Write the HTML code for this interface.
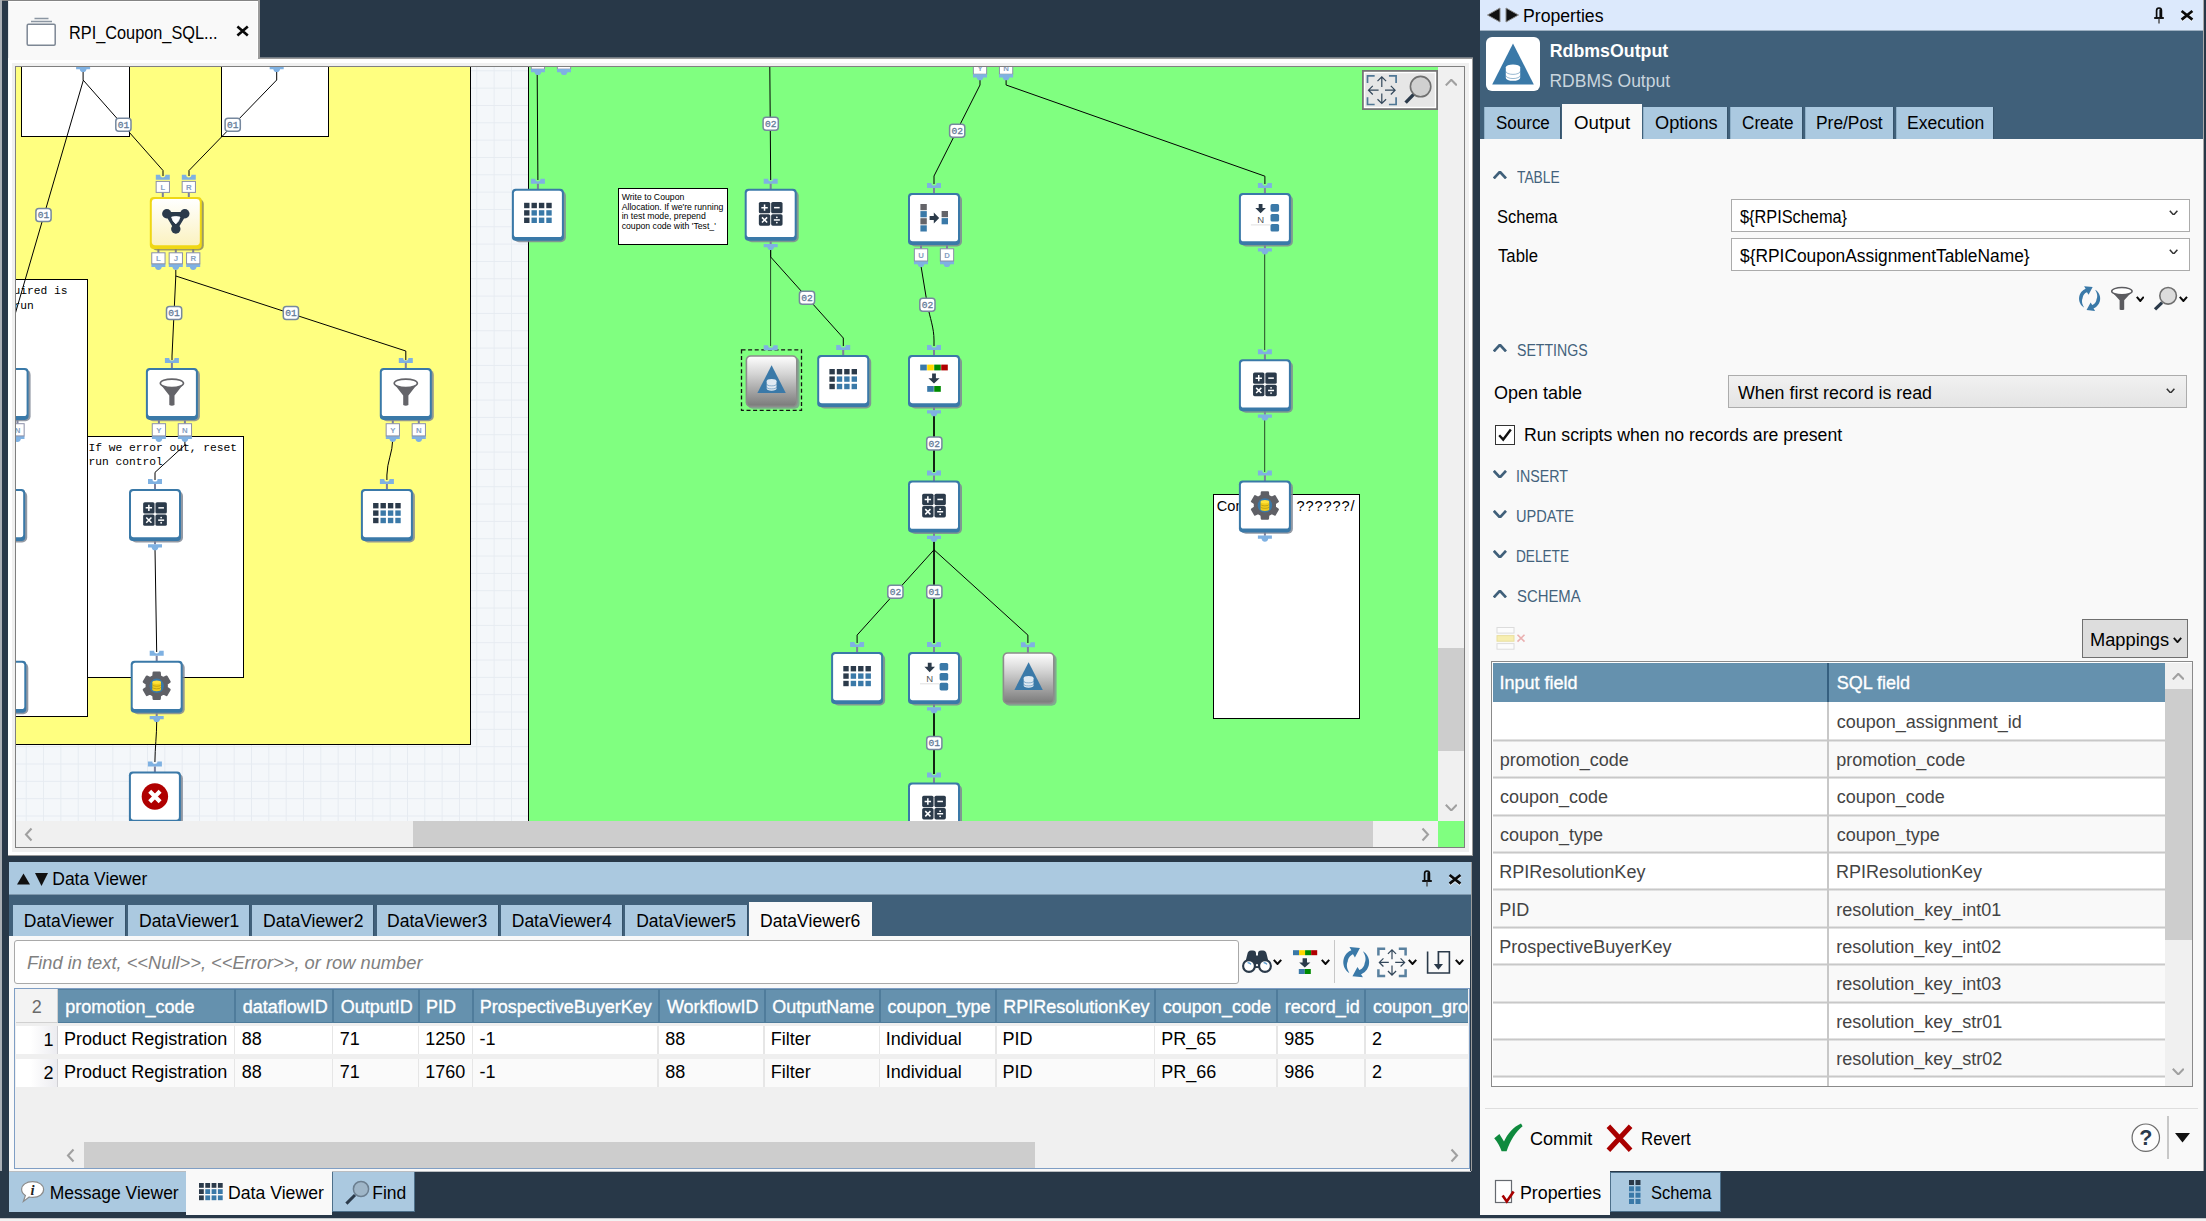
<!DOCTYPE html><html><head><meta charset="utf-8"><title>Dataflow</title><style>html,body{margin:0;padding:0}body{width:2206px;height:1221px;position:relative;overflow:hidden;background:#283848;font-family:"Liberation Sans",sans-serif;font-size:17.5px}div,span.t,svg{position:absolute;box-sizing:border-box}span.t{white-space:pre;transform-origin:0 0;display:block}</style></head><body>
<div style="left:0px;top:0px;width:2px;height:1171px;background:#a9aeb4;"></div>
<div style="left:2px;top:0px;width:258px;height:1px;background:#858585;"></div>
<div style="left:8px;top:1px;width:250px;height:59px;background:#f9f9f9;border-left:1px solid #e4e6e8;border-top:1px solid #fff;border-right:1px solid #fff;"></div>
<div style="left:258px;top:0px;width:2px;height:58px;background:#9c9c9c;"></div>
<div style="left:260px;top:57px;width:1213px;height:1px;background:#737b84;"></div>
<svg style="left:25px;top:15px" width="32" height="32"><path d="M9.5 3.5H23.5M6 6.5H27" stroke="#8b96a2" stroke-width="1.3" fill="none"/><rect x="2.2" y="9.2" width="28" height="21" rx="1.2" fill="#fff" stroke="#7d8794" stroke-width="1.5"/></svg>
<span class="t" style="left:69.06px;top:25.20px;font-size:17.5px;line-height:17.5px;color:#000;transform:scaleX(0.9315);">RPI_Coupon_SQL...</span>
<svg style="left:236px;top:25px" width="14" height="13"><path d="M1.4 1.6L11.8 10.6M11.8 1.6L1.4 10.6" stroke="#0a0a0a" stroke-width="2.6" fill="none"/></svg>
<div style="left:8px;top:58px;width:1465px;height:798px;background:#ffffff;border:1px solid #9a9a9a;border-left:none;"></div>
<div style="left:8px;top:58px;width:250px;height:2px;background:#f9f9f9;"></div>
<div style="left:12px;top:63px;width:1457px;height:789px;background:#f0f0f0;"></div>
<div style="left:15px;top:66px;width:1450px;height:782px;background:#f0f0f0;border:1px solid #7f7f7f;"></div>
<svg style="position:absolute;left:16px;top:67px" width="1422" height="754" viewBox="16 67 1422 754" font-family="'Liberation Sans',sans-serif"><defs><pattern id="gr" x="8.4" y="1" width="17.33" height="17.33" patternUnits="userSpaceOnUse"><path d="M0.5 0V17.33M0 0.5H17.33" stroke="#e6ebf1" stroke-width="1" fill="none"/></pattern><linearGradient id="gy" x1="0" y1="0" x2="0" y2="1"><stop offset="0" stop-color="#ffffff"/><stop offset="1" stop-color="#fbf2c0"/></linearGradient><linearGradient id="gg" x1="0" y1="0" x2="0" y2="1"><stop offset="0" stop-color="#fdfdfd"/><stop offset=".35" stop-color="#d4d4d4"/><stop offset="1" stop-color="#7c7c7c"/></linearGradient></defs><rect x="16" y="67" width="1422" height="754" fill="#f4f7fa"/><rect x="16" y="67" width="1422" height="754" fill="url(#gr)"/><rect x="10" y="60" width="460.5" height="684.5" fill="#ffff80" stroke="#000" stroke-width="1"/><rect x="528.5" y="60" width="920" height="770" fill="#80ff80" stroke="#000" stroke-width="1"/><rect x="21.5" y="60" width="108" height="76.5" fill="#fff" stroke="#000" stroke-width="1"/><rect x="221.5" y="60" width="107" height="76.5" fill="#fff" stroke="#000" stroke-width="1"/><rect x="10" y="279.5" width="77.5" height="437" fill="#fff" stroke="#000" stroke-width="1"/><rect x="87.5" y="436.5" width="156" height="241" fill="#fff" stroke="#000" stroke-width="1"/><rect x="618.5" y="188.5" width="109" height="56" fill="#fff" stroke="#000" stroke-width="1"/><rect x="1213.5" y="494.5" width="146" height="224" fill="#fff" stroke="#000" stroke-width="1"/><text x="-6.7" y="294.2" font-family="'Liberation Mono',monospace" font-size="11.25">required is</text><text x="-6.7" y="309.3" font-family="'Liberation Mono',monospace" font-size="11.25">to run</text><text x="88.6" y="451" font-family="'Liberation Mono',monospace" font-size="11.25">If we error out, reset</text><text x="88.6" y="464.7" font-family="'Liberation Mono',monospace" font-size="11.25">run control</text><text x="621.7" y="200.00" font-size="8.7">Write to Coupon</text><text x="621.7" y="209.55" font-size="8.7">Allocation. If we're running</text><text x="621.7" y="219.10" font-size="8.7">in test mode, prepend</text><text x="621.7" y="228.65" font-size="8.7">coupon code with 'Test_'</text><text x="1216.8" y="510.5" font-size="14.6">Com</text><text x="1296.4" y="510.5" font-size="14.6" letter-spacing="0.9">??????/</text><path d="M83.1 72V80L163 170.5V176 M83.4 80L14 318 M276.7 72V80L189 170.5V176" fill="none" stroke="#000" stroke-width="1"/><path d="M175.8 270V276L172 356V360 M175.8 276L405.8 351V360" fill="none" stroke="#000" stroke-width="1"/><path d="M184.9 440V445L155 472.4V480 M392.7 440C392.7 452 387 462 386.9 475V480" fill="none" stroke="#000" stroke-width="1"/><path d="M155 549L156.7 652 M156.7 722C156.7 735 155 748 154.9 762" fill="none" stroke="#000" stroke-width="1"/><path d="M537.2 74L537.9 180 M769.8 67L770.7 180" fill="none" stroke="#000" stroke-width="1"/><path d="M770.6 250V346" fill="none" stroke="#000" stroke-width="0.9" opacity=".8"/><path d="M770.7 250V257L843.3 338V346" fill="none" stroke="#000" stroke-width="1"/><path d="M980 80V85L934 176V184 M1006.1 80V85L1264.9 176.2V184" fill="none" stroke="#000" stroke-width="1"/><path d="M921 266L927.4 304.8C930 318 934 328 934 340V346" fill="none" stroke="#000" stroke-width="1"/><path d="M934 416V472 M934 541V643 M934 712V774" fill="none" stroke="#000" stroke-width="1.7"/><path d="M934 549.8L857.1 635.1V643 M934 549.8L1027.9 635.1V643" fill="none" stroke="#000" stroke-width="1"/><path d="M1264.7 253V350 M1264.7 420V472" fill="none" stroke="#000" stroke-width="0.9" opacity=".8"/><path d="M76.1 66H90.1V69.2H86.5A3.5 3.8 0 0 1 79.69999999999999 69.2H76.1Z" fill="#7fb1e2"/><path d="M269.7 66H283.7V69.2H280.09999999999997A3.5 3.8 0 0 1 273.3 69.2H269.7Z" fill="#7fb1e2"/><rect x="531.25" y="56.6" width="13.3" height="12.5" fill="#fff" stroke="#8a90a8" stroke-width="1"/><text x="537.9" y="65.85" font-size="7.8" font-weight="700" text-anchor="middle" fill="#86a0c2"></text><path d="M530.9 69H544.9V72.2H541.3A3.5 3.8 0 0 1 534.5 72.2H530.9Z" fill="#7fb1e2"/><rect x="557.35" y="56.6" width="13.3" height="12.5" fill="#fff" stroke="#8a90a8" stroke-width="1"/><text x="564" y="65.85" font-size="7.8" font-weight="700" text-anchor="middle" fill="#86a0c2"></text><path d="M557 69H571V72.2H567.4A3.5 3.8 0 0 1 560.6 72.2H557Z" fill="#7fb1e2"/><rect x="973.35" y="61.7" width="13.3" height="12.5" fill="#fff" stroke="#8a90a8" stroke-width="1"/><text x="980" y="70.95" font-size="7.8" font-weight="700" text-anchor="middle" fill="#86a0c2">Y</text><path d="M973 74.2H987V77.4H983.4A3.5 3.8 0 0 1 976.6 77.4H973Z" fill="#7fb1e2"/><rect x="999.45" y="61.7" width="13.3" height="12.5" fill="#fff" stroke="#8a90a8" stroke-width="1"/><text x="1006.1" y="70.95" font-size="7.8" font-weight="700" text-anchor="middle" fill="#86a0c2">N</text><path d="M999.1 74.2H1013.1V77.4H1009.5A3.5 3.8 0 0 1 1002.7 77.4H999.1Z" fill="#7fb1e2"/><rect x="161.8" y="192.0" width="2" height="6.0" fill="#7c7f9c"/><path d="M155.8 174.8H160.20000000000002A2.6 2.6 0 0 0 165.4 174.8H169.8V179.8H155.8Z" fill="#7fb1e2"/><rect x="156.15" y="181.4" width="13.3" height="11" fill="#fff" stroke="#8a90a8" stroke-width="1"/><text x="162.8" y="189.9" font-size="7.8" font-weight="700" text-anchor="middle" fill="#86a0c2">L</text><rect x="187.8" y="192.0" width="2" height="6.0" fill="#7c7f9c"/><path d="M181.8 174.8H186.20000000000002A2.6 2.6 0 0 0 191.4 174.8H195.8V179.8H181.8Z" fill="#7fb1e2"/><rect x="182.15" y="181.4" width="13.3" height="11" fill="#fff" stroke="#8a90a8" stroke-width="1"/><text x="188.8" y="189.9" font-size="7.8" font-weight="700" text-anchor="middle" fill="#86a0c2">R</text><rect x="157.4" y="247.0" width="2" height="6.0" fill="#7c7f9c"/><path d="M151.4 263.8H165.4V267.0H161.8A3.5 3.8 0 0 1 155.0 267.0H151.4Z" fill="#7fb1e2"/><rect x="151.75" y="252.8" width="13.3" height="11" fill="#fff" stroke="#8a90a8" stroke-width="1"/><text x="158.4" y="261.3" font-size="7.8" font-weight="700" text-anchor="middle" fill="#86a0c2">L</text><rect x="174.8" y="247.0" width="2" height="6.0" fill="#7c7f9c"/><path d="M168.8 263.8H182.8V267.0H179.20000000000002A3.5 3.8 0 0 1 172.4 267.0H168.8Z" fill="#7fb1e2"/><rect x="169.15" y="252.8" width="13.3" height="11" fill="#fff" stroke="#8a90a8" stroke-width="1"/><text x="175.8" y="261.3" font-size="7.8" font-weight="700" text-anchor="middle" fill="#86a0c2">J</text><rect x="192.20000000000002" y="247.0" width="2" height="6.0" fill="#7c7f9c"/><path d="M186.20000000000002 263.8H200.20000000000002V267.0H196.60000000000002A3.5 3.8 0 0 1 189.8 267.0H186.20000000000002Z" fill="#7fb1e2"/><rect x="186.55" y="252.8" width="13.3" height="11" fill="#fff" stroke="#8a90a8" stroke-width="1"/><text x="193.20000000000002" y="261.3" font-size="7.8" font-weight="700" text-anchor="middle" fill="#86a0c2">R</text><rect x="151.8" y="199.0" width="52" height="51.4" rx="5" fill="#8d8a5a" opacity=".85"/><rect x="149.8" y="197.0" width="52" height="52" rx="4" fill="#efd714"/><rect x="151.8" y="199.0" width="48" height="46.2" rx="3.4" fill="url(#gy)"/><path d="M166.8 213.8L184.8 213.8L175.8 229.0Z" fill="#2b3a4a" stroke="#2b3a4a" stroke-width="3.4" stroke-linejoin="round"/><circle cx="166.8" cy="213.8" r="4.7" fill="#2b3a4a"/><circle cx="184.8" cy="213.8" r="4.7" fill="#2b3a4a"/><circle cx="175.8" cy="229.0" r="4.7" fill="#2b3a4a"/><path d="M171.60000000000002 217.1Q175.8 215.8 180.0 217.1Q179.20000000000002 221.4 175.8 223.9Q172.4 221.4 171.60000000000002 217.1Z" fill="#fff" stroke="#fff" stroke-width="0.8" stroke-linejoin="round"/><path d="M164.9 357.9H169.3A2.6 2.6 0 0 0 174.5 357.9H178.9V362.9H164.9Z" fill="#7fb1e2"/><rect x="170.9" y="362.9" width="2" height="6.0" fill="#7c7f9c"/><rect x="157.9" y="417.9" width="2" height="6.0" fill="#7c7f9c"/><path d="M151.9 435.9H165.9V439.09999999999997H162.3A3.5 3.8 0 0 1 155.5 439.09999999999997H151.9Z" fill="#7fb1e2"/><rect x="152.25" y="423.7" width="13.3" height="12.2" fill="#fff" stroke="#8a90a8" stroke-width="1"/><text x="158.9" y="432.8" font-size="7.8" font-weight="700" text-anchor="middle" fill="#86a0c2">Y</text><rect x="183.9" y="417.9" width="2" height="6.0" fill="#7c7f9c"/><path d="M177.9 435.9H191.9V439.09999999999997H188.3A3.5 3.8 0 0 1 181.5 439.09999999999997H177.9Z" fill="#7fb1e2"/><rect x="178.25" y="423.7" width="13.3" height="12.2" fill="#fff" stroke="#8a90a8" stroke-width="1"/><text x="184.9" y="432.8" font-size="7.8" font-weight="700" text-anchor="middle" fill="#86a0c2">N</text><rect x="147.9" y="369.9" width="52" height="51.4" rx="5" fill="#7f8794" opacity=".85"/><rect x="145.9" y="367.9" width="52" height="52" rx="3.8" fill="#3a79a8"/><rect x="147.9" y="369.9" width="48" height="46.2" rx="2.6" fill="#fff"/><path d="M159.9 383.4 L169.3 395.4 V404.9 Q171.9 406.5 174.5 404.9 V395.4 L183.9 383.4 Z" fill="#646469"/><ellipse cx="171.9" cy="383.29999999999995" rx="11.6" ry="4.2" fill="#fff" stroke="#646469" stroke-width="1.6"/><path d="M398.8 357.9H403.2A2.6 2.6 0 0 0 408.40000000000003 357.9H412.8V362.9H398.8Z" fill="#7fb1e2"/><rect x="404.8" y="362.9" width="2" height="6.0" fill="#7c7f9c"/><rect x="391.8" y="417.9" width="2" height="6.0" fill="#7c7f9c"/><path d="M385.8 435.9H399.8V439.09999999999997H396.2A3.5 3.8 0 0 1 389.40000000000003 439.09999999999997H385.8Z" fill="#7fb1e2"/><rect x="386.15000000000003" y="423.7" width="13.3" height="12.2" fill="#fff" stroke="#8a90a8" stroke-width="1"/><text x="392.8" y="432.8" font-size="7.8" font-weight="700" text-anchor="middle" fill="#86a0c2">Y</text><rect x="417.8" y="417.9" width="2" height="6.0" fill="#7c7f9c"/><path d="M411.8 435.9H425.8V439.09999999999997H422.2A3.5 3.8 0 0 1 415.40000000000003 439.09999999999997H411.8Z" fill="#7fb1e2"/><rect x="412.15000000000003" y="423.7" width="13.3" height="12.2" fill="#fff" stroke="#8a90a8" stroke-width="1"/><text x="418.8" y="432.8" font-size="7.8" font-weight="700" text-anchor="middle" fill="#86a0c2">N</text><rect x="381.8" y="369.9" width="52" height="51.4" rx="5" fill="#7f8794" opacity=".85"/><rect x="379.8" y="367.9" width="52" height="52" rx="3.8" fill="#3a79a8"/><rect x="381.8" y="369.9" width="48" height="46.2" rx="2.6" fill="#fff"/><path d="M393.8 383.4 L403.2 395.4 V404.9 Q405.8 406.5 408.40000000000003 404.9 V395.4 L417.8 383.4 Z" fill="#646469"/><ellipse cx="405.8" cy="383.29999999999995" rx="11.6" ry="4.2" fill="#fff" stroke="#646469" stroke-width="1.6"/><rect x="16.5" y="417.9" width="2" height="6.0" fill="#7c7f9c"/><path d="M10.5 435.9H24.5V439.09999999999997H20.9A3.5 3.8 0 0 1 14.1 439.09999999999997H10.5Z" fill="#7fb1e2"/><rect x="10.85" y="423.7" width="13.3" height="12.2" fill="#fff" stroke="#8a90a8" stroke-width="1"/><text x="17.5" y="432.8" font-size="7.8" font-weight="700" text-anchor="middle" fill="#86a0c2">N</text><rect x="-21.4" y="369.9" width="52" height="51.4" rx="5" fill="#7f8794" opacity=".85"/><rect x="-23.4" y="367.9" width="52" height="52" rx="3.8" fill="#3a79a8"/><rect x="-21.4" y="369.9" width="48" height="46.2" rx="2.6" fill="#fff"/><path d="M-9.4 383.4 L0.0 395.4 V404.9 Q2.6 406.5 5.2 404.9 V395.4 L14.6 383.4 Z" fill="#646469"/><ellipse cx="2.6" cy="383.29999999999995" rx="11.6" ry="4.2" fill="#fff" stroke="#646469" stroke-width="1.6"/><path d="M148 479H152.4A2.6 2.6 0 0 0 157.6 479H162V484H148Z" fill="#7fb1e2"/><rect x="154" y="484" width="2" height="6" fill="#7c7f9c"/><rect x="154" y="539" width="2" height="5.399999999999977" fill="#7c7f9c"/><path d="M148 544.2H162V547.4000000000001H158.4A3.5 3.8 0 0 1 151.6 547.4000000000001H148Z" fill="#7fb1e2"/><rect x="131" y="491" width="52" height="51.4" rx="5" fill="#7f8794" opacity=".85"/><rect x="129" y="489" width="52" height="52" rx="3.8" fill="#3a79a8"/><rect x="131" y="491" width="48" height="46.2" rx="2.6" fill="#fff"/><rect x="143.15" y="502.15" width="11.4" height="11.4" rx="1.6" fill="#2b3a4a"/><rect x="155.45" y="502.15" width="11.4" height="11.4" rx="1.6" fill="#2b3a4a"/><rect x="143.15" y="514.45" width="11.4" height="11.4" rx="1.6" fill="#2b3a4a"/><rect x="155.45" y="514.45" width="11.4" height="11.4" rx="1.6" fill="#2b3a4a"/><path d="M145.65000000000003 507.85H152.05M148.85000000000002 504.65000000000003V511.05" stroke="#fff" stroke-width="1.5" stroke-linecap="butt"/><path d="M158.34999999999997 507.85H163.95" stroke="#fff" stroke-width="1.5" stroke-linecap="butt"/><path d="M146.25000000000003 517.5500000000001L151.45000000000002 522.7500000000001M151.45000000000002 517.5500000000001L146.25000000000003 522.7500000000001" stroke="#fff" stroke-width="1.5" stroke-linecap="butt"/><path d="M158.14999999999998 520.1500000000001H164.14999999999998" stroke="#fff" stroke-width="1.5" stroke-linecap="butt"/><circle cx="161.14999999999998" cy="517.5500000000001" r="0.9" fill="#fff"/><circle cx="161.14999999999998" cy="522.7500000000001" r="0.9" fill="#fff"/><path d="M379.9 479H384.29999999999995A2.6 2.6 0 0 0 389.5 479H393.9V484H379.9Z" fill="#7fb1e2"/><rect x="385.9" y="484" width="2" height="6" fill="#7c7f9c"/><rect x="362.9" y="491" width="52" height="51.4" rx="5" fill="#7f8794" opacity=".85"/><rect x="360.9" y="489" width="52" height="52" rx="3.8" fill="#3a79a8"/><rect x="362.9" y="491" width="48" height="46.2" rx="2.6" fill="#fff"/><rect x="373.10" y="503.00" width="5.4" height="5.4" fill="#2b3a4a"/><rect x="380.50" y="503.00" width="5.4" height="5.4" fill="#2b3a4a"/><rect x="387.90" y="503.00" width="5.4" height="5.4" fill="#2b3a4a"/><rect x="395.30" y="503.00" width="5.4" height="5.4" fill="#2b3a4a"/><rect x="373.10" y="510.40" width="5.4" height="5.4" fill="#2b3a4a"/><rect x="380.50" y="510.40" width="5.4" height="5.4" fill="#3a79a8"/><rect x="387.90" y="510.40" width="5.4" height="5.4" fill="#3a79a8"/><rect x="395.30" y="510.40" width="5.4" height="5.4" fill="#3a79a8"/><rect x="373.10" y="517.80" width="5.4" height="5.4" fill="#2b3a4a"/><rect x="380.50" y="517.80" width="5.4" height="5.4" fill="#3a79a8"/><rect x="387.90" y="517.80" width="5.4" height="5.4" fill="#3a79a8"/><rect x="395.30" y="517.80" width="5.4" height="5.4" fill="#3a79a8"/><rect x="-24.8" y="491" width="52" height="51.4" rx="5" fill="#7f8794" opacity=".85"/><rect x="-26.8" y="489" width="52" height="52" rx="3.8" fill="#3a79a8"/><rect x="-24.8" y="491" width="48" height="46.2" rx="2.6" fill="#fff"/><rect x="-14.60" y="503.00" width="5.4" height="5.4" fill="#2b3a4a"/><rect x="-7.20" y="503.00" width="5.4" height="5.4" fill="#2b3a4a"/><rect x="0.20" y="503.00" width="5.4" height="5.4" fill="#2b3a4a"/><rect x="7.60" y="503.00" width="5.4" height="5.4" fill="#2b3a4a"/><rect x="-14.60" y="510.40" width="5.4" height="5.4" fill="#2b3a4a"/><rect x="-7.20" y="510.40" width="5.4" height="5.4" fill="#3a79a8"/><rect x="0.20" y="510.40" width="5.4" height="5.4" fill="#3a79a8"/><rect x="7.60" y="510.40" width="5.4" height="5.4" fill="#3a79a8"/><rect x="-14.60" y="517.80" width="5.4" height="5.4" fill="#2b3a4a"/><rect x="-7.20" y="517.80" width="5.4" height="5.4" fill="#3a79a8"/><rect x="0.20" y="517.80" width="5.4" height="5.4" fill="#3a79a8"/><rect x="7.60" y="517.80" width="5.4" height="5.4" fill="#3a79a8"/><path d="M149.7 650.8H154.1A2.6 2.6 0 0 0 159.29999999999998 650.8H163.7V655.8H149.7Z" fill="#7fb1e2"/><rect x="155.7" y="655.8" width="2" height="6.0" fill="#7c7f9c"/><rect x="155.7" y="710.8" width="2" height="5.399999999999977" fill="#7c7f9c"/><path d="M149.7 716.0H163.7V719.2H160.1A3.5 3.8 0 0 1 153.29999999999998 719.2H149.7Z" fill="#7fb1e2"/><rect x="132.7" y="662.8" width="52" height="51.4" rx="5" fill="#7f8794" opacity=".85"/><rect x="130.7" y="660.8" width="52" height="52" rx="3.8" fill="#3a79a8"/><rect x="132.7" y="662.8" width="48" height="46.2" rx="2.6" fill="#fff"/><path d="M153.38 676.16 L153.66 672.65 L159.74 672.65 L160.02 676.16 L163.39 678.10 L166.57 676.59 L169.61 681.85 L166.71 683.85 L166.71 687.75 L169.61 689.75 L166.57 695.01 L163.39 693.50 L160.02 695.44 L159.74 698.95 L153.66 698.95 L153.38 695.44 L150.01 693.50 L146.83 695.01 L143.79 689.75 L146.69 687.75 L146.69 683.85 L143.79 681.85 L146.83 676.59 L150.01 678.10Z" fill="#5f6066" stroke="#5f6066" stroke-width="2.2" stroke-linejoin="round"/><circle cx="156.7" cy="685.8" r="10.6" fill="#5f6066"/><circle cx="156.7" cy="685.8" r="7.2" fill="#3a79a8"/><rect x="152.39999999999998" y="682.1999999999999" width="8.6" height="7.4" fill="#f0cc1a"/><ellipse cx="156.7" cy="689.5999999999999" rx="4.3" ry="1.7" fill="#f0cc1a"/><ellipse cx="156.7" cy="682.1999999999999" rx="4.3" ry="1.7" fill="#ffe23a"/><path d="M152.39999999999998 684.5999999999999A4.3 1.7 0 0 0 161.0 684.5999999999999M152.39999999999998 687.0999999999999A4.3 1.7 0 0 0 161.0 687.0999999999999" fill="none" stroke="#b79a10" stroke-width="0.8"/><rect x="-23.7" y="662.8" width="52" height="51.4" rx="5" fill="#7f8794" opacity=".85"/><rect x="-25.7" y="660.8" width="52" height="52" rx="3.8" fill="#3a79a8"/><rect x="-23.7" y="662.8" width="48" height="46.2" rx="2.6" fill="#fff"/><rect x="-13.50" y="674.80" width="5.4" height="5.4" fill="#2b3a4a"/><rect x="-6.10" y="674.80" width="5.4" height="5.4" fill="#2b3a4a"/><rect x="1.30" y="674.80" width="5.4" height="5.4" fill="#2b3a4a"/><rect x="8.70" y="674.80" width="5.4" height="5.4" fill="#2b3a4a"/><rect x="-13.50" y="682.20" width="5.4" height="5.4" fill="#2b3a4a"/><rect x="-6.10" y="682.20" width="5.4" height="5.4" fill="#3a79a8"/><rect x="1.30" y="682.20" width="5.4" height="5.4" fill="#3a79a8"/><rect x="8.70" y="682.20" width="5.4" height="5.4" fill="#3a79a8"/><rect x="-13.50" y="689.60" width="5.4" height="5.4" fill="#2b3a4a"/><rect x="-6.10" y="689.60" width="5.4" height="5.4" fill="#3a79a8"/><rect x="1.30" y="689.60" width="5.4" height="5.4" fill="#3a79a8"/><rect x="8.70" y="689.60" width="5.4" height="5.4" fill="#3a79a8"/><path d="M147.9 761.5H152.3A2.6 2.6 0 0 0 157.5 761.5H161.9V766.5H147.9Z" fill="#7fb1e2"/><rect x="153.9" y="766.5" width="2" height="6.0" fill="#7c7f9c"/><rect x="130.9" y="773.5" width="52" height="51.4" rx="5" fill="#7f8794" opacity=".85"/><rect x="128.9" y="771.5" width="52" height="52" rx="3.8" fill="#3a79a8"/><rect x="130.9" y="773.5" width="48" height="46.2" rx="2.6" fill="#fff"/><circle cx="154.9" cy="796.5" r="13.2" fill="#b00000"/><path d="M149.70000000000002 791.3L160.1 801.7M160.1 791.3L149.70000000000002 801.7" stroke="#fff" stroke-width="4.2"/><path d="M530.9 178.8H535.3A2.6 2.6 0 0 0 540.5 178.8H544.9V183.8H530.9Z" fill="#7fb1e2"/><rect x="536.9" y="183.8" width="2" height="6.0" fill="#7c7f9c"/><rect x="513.9" y="190.8" width="52" height="51.4" rx="5" fill="#7f8794" opacity=".85"/><rect x="511.9" y="188.8" width="52" height="52" rx="3.8" fill="#3a79a8"/><rect x="513.9" y="190.8" width="48" height="46.2" rx="2.6" fill="#fff"/><rect x="524.10" y="202.80" width="5.4" height="5.4" fill="#2b3a4a"/><rect x="531.50" y="202.80" width="5.4" height="5.4" fill="#2b3a4a"/><rect x="538.90" y="202.80" width="5.4" height="5.4" fill="#2b3a4a"/><rect x="546.30" y="202.80" width="5.4" height="5.4" fill="#2b3a4a"/><rect x="524.10" y="210.20" width="5.4" height="5.4" fill="#2b3a4a"/><rect x="531.50" y="210.20" width="5.4" height="5.4" fill="#3a79a8"/><rect x="538.90" y="210.20" width="5.4" height="5.4" fill="#3a79a8"/><rect x="546.30" y="210.20" width="5.4" height="5.4" fill="#3a79a8"/><rect x="524.10" y="217.60" width="5.4" height="5.4" fill="#2b3a4a"/><rect x="531.50" y="217.60" width="5.4" height="5.4" fill="#3a79a8"/><rect x="538.90" y="217.60" width="5.4" height="5.4" fill="#3a79a8"/><rect x="546.30" y="217.60" width="5.4" height="5.4" fill="#3a79a8"/><path d="M763.7 178.8H768.1A2.6 2.6 0 0 0 773.3000000000001 178.8H777.7V183.8H763.7Z" fill="#7fb1e2"/><rect x="769.7" y="183.8" width="2" height="6.0" fill="#7c7f9c"/><rect x="769.7" y="238.8" width="2" height="5.400000000000006" fill="#7c7f9c"/><path d="M763.7 244.0H777.7V247.2H774.1A3.5 3.8 0 0 1 767.3000000000001 247.2H763.7Z" fill="#7fb1e2"/><rect x="746.7" y="190.8" width="52" height="51.4" rx="5" fill="#7f8794" opacity=".85"/><rect x="744.7" y="188.8" width="52" height="52" rx="3.8" fill="#3a79a8"/><rect x="746.7" y="190.8" width="48" height="46.2" rx="2.6" fill="#fff"/><rect x="758.85" y="201.95" width="11.4" height="11.4" rx="1.6" fill="#2b3a4a"/><rect x="771.15" y="201.95" width="11.4" height="11.4" rx="1.6" fill="#2b3a4a"/><rect x="758.85" y="214.25" width="11.4" height="11.4" rx="1.6" fill="#2b3a4a"/><rect x="771.15" y="214.25" width="11.4" height="11.4" rx="1.6" fill="#2b3a4a"/><path d="M761.3499999999999 207.65000000000003H767.75M764.55 204.45000000000005V210.85000000000002" stroke="#fff" stroke-width="1.5" stroke-linecap="butt"/><path d="M774.0500000000002 207.65000000000003H779.6500000000001" stroke="#fff" stroke-width="1.5" stroke-linecap="butt"/><path d="M761.9499999999999 217.35L767.15 222.54999999999998M767.15 217.35L761.9499999999999 222.54999999999998" stroke="#fff" stroke-width="1.5" stroke-linecap="butt"/><path d="M773.8500000000001 219.95H779.8500000000001" stroke="#fff" stroke-width="1.5" stroke-linecap="butt"/><circle cx="776.8500000000001" cy="217.35" r="0.9" fill="#fff"/><circle cx="776.8500000000001" cy="222.54999999999998" r="0.9" fill="#fff"/><path d="M927 183H931.4A2.6 2.6 0 0 0 936.6 183H941V188H927Z" fill="#7fb1e2"/><rect x="933" y="188" width="2" height="6" fill="#7c7f9c"/><rect x="920" y="243" width="2" height="6" fill="#7c7f9c"/><path d="M914 261.0H928V264.2H924.4A3.5 3.8 0 0 1 917.6 264.2H914Z" fill="#7fb1e2"/><rect x="914.35" y="248.8" width="13.3" height="12.2" fill="#fff" stroke="#8a90a8" stroke-width="1"/><text x="921" y="257.9" font-size="7.8" font-weight="700" text-anchor="middle" fill="#86a0c2">U</text><rect x="946" y="243" width="2" height="6" fill="#7c7f9c"/><path d="M940 261.0H954V264.2H950.4A3.5 3.8 0 0 1 943.6 264.2H940Z" fill="#7fb1e2"/><rect x="940.35" y="248.8" width="13.3" height="12.2" fill="#fff" stroke="#8a90a8" stroke-width="1"/><text x="947" y="257.9" font-size="7.8" font-weight="700" text-anchor="middle" fill="#86a0c2">D</text><rect x="910" y="195" width="52" height="51.4" rx="5" fill="#7f8794" opacity=".85"/><rect x="908" y="193" width="52" height="52" rx="3.8" fill="#3a79a8"/><rect x="910" y="195" width="48" height="46.2" rx="2.6" fill="#fff"/><rect x="920.4" y="204.00" width="6.4" height="6.2" fill="#646469"/><rect x="920.4" y="211.10" width="6.4" height="6.2" fill="#3a79a8"/><rect x="920.4" y="218.20" width="6.4" height="6.2" fill="#646469"/><rect x="920.4" y="225.30" width="6.4" height="6.2" fill="#3a79a8"/><rect x="941.6" y="211" width="6.4" height="6.2" fill="#646469"/><rect x="941.6" y="218.1" width="6.4" height="6.2" fill="#3a79a8"/><path d="M929.6 216.1H933.8V212.4L939.2 218L933.8 223.6V219.9H929.6Z" fill="#2b3a4a"/><path d="M1257.9 183.1H1262.3000000000002A2.6 2.6 0 0 0 1267.5 183.1H1271.9V188.1H1257.9Z" fill="#7fb1e2"/><rect x="1263.9" y="188.1" width="2" height="6.0" fill="#7c7f9c"/><rect x="1263.9" y="243.1" width="2" height="5.400000000000006" fill="#7c7f9c"/><path d="M1257.9 248.3H1271.9V251.5H1268.3000000000002A3.5 3.8 0 0 1 1261.5 251.5H1257.9Z" fill="#7fb1e2"/><rect x="1240.9" y="195.1" width="52" height="51.4" rx="5" fill="#7f8794" opacity=".85"/><rect x="1238.9" y="193.1" width="52" height="52" rx="3.8" fill="#3a79a8"/><rect x="1240.9" y="195.1" width="48" height="46.2" rx="2.6" fill="#fff"/><rect x="1270.5" y="204.10" width="8.6" height="7.6" rx="1.6" fill="#3a79a8"/><rect x="1270.5" y="214.00" width="8.6" height="7.6" rx="1.6" fill="#3a79a8"/><rect x="1270.5" y="223.90" width="8.6" height="7.6" rx="1.6" fill="#3a79a8"/><path d="M1258.7 203.9H1262.5V207.9H1265.9L1260.6000000000001 213.3L1255.3000000000002 207.9H1258.7Z" fill="#2b3a4a"/><text x="1260.6000000000001" y="222.7" font-size="9.5" text-anchor="middle" fill="#555">N</text><path d="M1250.9 224.9H1270.5" stroke="#d8d8d8" stroke-width="0.8"/><rect x="741.5" y="349.8" width="60" height="60.6" fill="none" stroke="#111" stroke-width="1.3" stroke-dasharray="4 2.6"/><rect x="747.6" y="357.2" width="52" height="51.6" rx="5" fill="#7f8794" opacity=".7"/><rect x="745.6" y="355.2" width="52" height="52" rx="5" fill="#8c8c8c"/><rect x="747.2" y="356.8" width="48.8" height="48.8" rx="3.6" fill="url(#gg)"/><path d="M771.6 365.2L785.8000000000001 393.0H757.4Z" fill="#3a79a8"/><path d="M766.7 381.0V388.6A4.9 2.0580000000000003 0 0 0 776.5 388.6V381.0Z" fill="#dfe9f2"/><ellipse cx="771.6" cy="381.0" rx="4.9" ry="2.0580000000000003" fill="#dfe9f2"/><path d="M766.7 383.8039A4.9 2.0580000000000003 0 0 0 776.5 383.8039M766.7 386.84389999999996A4.9 2.0580000000000003 0 0 0 776.5 386.84389999999996" fill="none" stroke="#3a79a8" stroke-width="0.7" opacity=".75"/><path d="M763.7 345.2H768.1A2.6 2.6 0 0 0 773.3000000000001 345.2H777.7V350.2H763.7Z" fill="#7fb1e2"/><path d="M836.2 345H840.6A2.6 2.6 0 0 0 845.8000000000001 345H850.2V350H836.2Z" fill="#7fb1e2"/><rect x="842.2" y="350" width="2" height="6" fill="#7c7f9c"/><rect x="819.2" y="357" width="52" height="51.4" rx="5" fill="#7f8794" opacity=".85"/><rect x="817.2" y="355" width="52" height="52" rx="3.8" fill="#3a79a8"/><rect x="819.2" y="357" width="48" height="46.2" rx="2.6" fill="#fff"/><rect x="829.40" y="369.00" width="5.4" height="5.4" fill="#2b3a4a"/><rect x="836.80" y="369.00" width="5.4" height="5.4" fill="#2b3a4a"/><rect x="844.20" y="369.00" width="5.4" height="5.4" fill="#2b3a4a"/><rect x="851.60" y="369.00" width="5.4" height="5.4" fill="#2b3a4a"/><rect x="829.40" y="376.40" width="5.4" height="5.4" fill="#2b3a4a"/><rect x="836.80" y="376.40" width="5.4" height="5.4" fill="#3a79a8"/><rect x="844.20" y="376.40" width="5.4" height="5.4" fill="#3a79a8"/><rect x="851.60" y="376.40" width="5.4" height="5.4" fill="#3a79a8"/><rect x="829.40" y="383.80" width="5.4" height="5.4" fill="#2b3a4a"/><rect x="836.80" y="383.80" width="5.4" height="5.4" fill="#3a79a8"/><rect x="844.20" y="383.80" width="5.4" height="5.4" fill="#3a79a8"/><rect x="851.60" y="383.80" width="5.4" height="5.4" fill="#3a79a8"/><path d="M927 345H931.4A2.6 2.6 0 0 0 936.6 345H941V350H927Z" fill="#7fb1e2"/><rect x="933" y="350" width="2" height="6" fill="#7c7f9c"/><rect x="933" y="405" width="2" height="5.399999999999977" fill="#7c7f9c"/><path d="M927 410.2H941V413.4H937.4A3.5 3.8 0 0 1 930.6 413.4H927Z" fill="#7fb1e2"/><rect x="910" y="357" width="52" height="51.4" rx="5" fill="#7f8794" opacity=".85"/><rect x="908" y="355" width="52" height="52" rx="3.8" fill="#3a79a8"/><rect x="910" y="357" width="48" height="46.2" rx="2.6" fill="#fff"/><rect x="920.20" y="364.6" width="6.6" height="5.8" fill="#3a79a8"/><rect x="927.20" y="364.6" width="6.6" height="5.8" fill="#ffd800"/><rect x="934.20" y="364.6" width="6.6" height="5.8" fill="#008a00"/><rect x="941.20" y="364.6" width="6.6" height="5.8" fill="#b00000"/><rect x="927.20" y="386" width="6.6" height="5.8" fill="#3a79a8"/><rect x="934.20" y="386" width="6.6" height="5.8" fill="#008a00"/><path d="M932.1 373.6H935.9V378.2H939.6L934 383.6L928.4 378.2H932.1Z" fill="#2b3a4a"/><path d="M1257.9 349.3H1262.3000000000002A2.6 2.6 0 0 0 1267.5 349.3H1271.9V354.3H1257.9Z" fill="#7fb1e2"/><rect x="1263.9" y="354.3" width="2" height="6.0" fill="#7c7f9c"/><rect x="1263.9" y="409.3" width="2" height="5.399999999999977" fill="#7c7f9c"/><path d="M1257.9 414.5H1271.9V417.7H1268.3000000000002A3.5 3.8 0 0 1 1261.5 417.7H1257.9Z" fill="#7fb1e2"/><rect x="1240.9" y="361.3" width="52" height="51.4" rx="5" fill="#7f8794" opacity=".85"/><rect x="1238.9" y="359.3" width="52" height="52" rx="3.8" fill="#3a79a8"/><rect x="1240.9" y="361.3" width="48" height="46.2" rx="2.6" fill="#fff"/><rect x="1253.05" y="372.45" width="11.4" height="11.4" rx="1.6" fill="#2b3a4a"/><rect x="1265.35" y="372.45" width="11.4" height="11.4" rx="1.6" fill="#2b3a4a"/><rect x="1253.05" y="384.75" width="11.4" height="11.4" rx="1.6" fill="#2b3a4a"/><rect x="1265.35" y="384.75" width="11.4" height="11.4" rx="1.6" fill="#2b3a4a"/><path d="M1255.55 378.15000000000003H1261.95M1258.75 374.95000000000005V381.35" stroke="#fff" stroke-width="1.5" stroke-linecap="butt"/><path d="M1268.2500000000002 378.15000000000003H1273.8500000000001" stroke="#fff" stroke-width="1.5" stroke-linecap="butt"/><path d="M1256.15 387.84999999999997L1261.35 393.05M1261.35 387.84999999999997L1256.15 393.05" stroke="#fff" stroke-width="1.5" stroke-linecap="butt"/><path d="M1268.0500000000002 390.45H1274.0500000000002" stroke="#fff" stroke-width="1.5" stroke-linecap="butt"/><circle cx="1271.0500000000002" cy="387.84999999999997" r="0.9" fill="#fff"/><circle cx="1271.0500000000002" cy="393.05" r="0.9" fill="#fff"/><path d="M927 470.6H931.4A2.6 2.6 0 0 0 936.6 470.6H941V475.6H927Z" fill="#7fb1e2"/><rect x="933" y="475.6" width="2" height="6.0" fill="#7c7f9c"/><rect x="933" y="530.6" width="2" height="5.399999999999977" fill="#7c7f9c"/><path d="M927 535.8000000000001H941V539.0000000000001H937.4A3.5 3.8 0 0 1 930.6 539.0000000000001H927Z" fill="#7fb1e2"/><rect x="910" y="482.6" width="52" height="51.4" rx="5" fill="#7f8794" opacity=".85"/><rect x="908" y="480.6" width="52" height="52" rx="3.8" fill="#3a79a8"/><rect x="910" y="482.6" width="48" height="46.2" rx="2.6" fill="#fff"/><rect x="922.15" y="493.75" width="11.4" height="11.4" rx="1.6" fill="#2b3a4a"/><rect x="934.45" y="493.75" width="11.4" height="11.4" rx="1.6" fill="#2b3a4a"/><rect x="922.15" y="506.05" width="11.4" height="11.4" rx="1.6" fill="#2b3a4a"/><rect x="934.45" y="506.05" width="11.4" height="11.4" rx="1.6" fill="#2b3a4a"/><path d="M924.6499999999999 499.45000000000005H931.05M927.8499999999999 496.25000000000006V502.65000000000003" stroke="#fff" stroke-width="1.5" stroke-linecap="butt"/><path d="M937.3500000000001 499.45000000000005H942.95" stroke="#fff" stroke-width="1.5" stroke-linecap="butt"/><path d="M925.2499999999999 509.15L930.4499999999999 514.35M930.4499999999999 509.15L925.2499999999999 514.35" stroke="#fff" stroke-width="1.5" stroke-linecap="butt"/><path d="M937.1500000000001 511.75H943.1500000000001" stroke="#fff" stroke-width="1.5" stroke-linecap="butt"/><circle cx="940.1500000000001" cy="509.15" r="0.9" fill="#fff"/><circle cx="940.1500000000001" cy="514.35" r="0.9" fill="#fff"/><path d="M1257.9 470.4H1262.3000000000002A2.6 2.6 0 0 0 1267.5 470.4H1271.9V475.4H1257.9Z" fill="#7fb1e2"/><rect x="1263.9" y="475.4" width="2" height="6.0" fill="#7c7f9c"/><rect x="1263.9" y="530.4" width="2" height="5.399999999999977" fill="#7c7f9c"/><path d="M1257.9 535.6H1271.9V538.8000000000001H1268.3000000000002A3.5 3.8 0 0 1 1261.5 538.8000000000001H1257.9Z" fill="#7fb1e2"/><rect x="1240.9" y="482.4" width="52" height="51.4" rx="5" fill="#7f8794" opacity=".85"/><rect x="1238.9" y="480.4" width="52" height="52" rx="3.8" fill="#3a79a8"/><rect x="1240.9" y="482.4" width="48" height="46.2" rx="2.6" fill="#fff"/><path d="M1261.58 495.76 L1261.86 492.25 L1267.94 492.25 L1268.22 495.76 L1271.59 497.70 L1274.77 496.19 L1277.81 501.45 L1274.91 503.45 L1274.91 507.35 L1277.81 509.35 L1274.77 514.61 L1271.59 513.10 L1268.22 515.04 L1267.94 518.55 L1261.86 518.55 L1261.58 515.04 L1258.21 513.10 L1255.03 514.61 L1251.99 509.35 L1254.89 507.35 L1254.89 503.45 L1251.99 501.45 L1255.03 496.19 L1258.21 497.70Z" fill="#5f6066" stroke="#5f6066" stroke-width="2.2" stroke-linejoin="round"/><circle cx="1264.9" cy="505.4" r="10.6" fill="#5f6066"/><circle cx="1264.9" cy="505.4" r="7.2" fill="#3a79a8"/><rect x="1260.6000000000001" y="501.79999999999995" width="8.6" height="7.4" fill="#f0cc1a"/><ellipse cx="1264.9" cy="509.2" rx="4.3" ry="1.7" fill="#f0cc1a"/><ellipse cx="1264.9" cy="501.79999999999995" rx="4.3" ry="1.7" fill="#ffe23a"/><path d="M1260.6000000000001 504.2A4.3 1.7 0 0 0 1269.2 504.2M1260.6000000000001 506.7A4.3 1.7 0 0 0 1269.2 506.7" fill="none" stroke="#b79a10" stroke-width="0.8"/><path d="M850.1 642H854.5A2.6 2.6 0 0 0 859.7 642H864.1V647H850.1Z" fill="#7fb1e2"/><rect x="856.1" y="647" width="2" height="6" fill="#7c7f9c"/><rect x="833.1" y="654" width="52" height="51.4" rx="5" fill="#7f8794" opacity=".85"/><rect x="831.1" y="652" width="52" height="52" rx="3.8" fill="#3a79a8"/><rect x="833.1" y="654" width="48" height="46.2" rx="2.6" fill="#fff"/><rect x="843.30" y="666.00" width="5.4" height="5.4" fill="#2b3a4a"/><rect x="850.70" y="666.00" width="5.4" height="5.4" fill="#2b3a4a"/><rect x="858.10" y="666.00" width="5.4" height="5.4" fill="#2b3a4a"/><rect x="865.50" y="666.00" width="5.4" height="5.4" fill="#2b3a4a"/><rect x="843.30" y="673.40" width="5.4" height="5.4" fill="#2b3a4a"/><rect x="850.70" y="673.40" width="5.4" height="5.4" fill="#3a79a8"/><rect x="858.10" y="673.40" width="5.4" height="5.4" fill="#3a79a8"/><rect x="865.50" y="673.40" width="5.4" height="5.4" fill="#3a79a8"/><rect x="843.30" y="680.80" width="5.4" height="5.4" fill="#2b3a4a"/><rect x="850.70" y="680.80" width="5.4" height="5.4" fill="#3a79a8"/><rect x="858.10" y="680.80" width="5.4" height="5.4" fill="#3a79a8"/><rect x="865.50" y="680.80" width="5.4" height="5.4" fill="#3a79a8"/><path d="M927 642H931.4A2.6 2.6 0 0 0 936.6 642H941V647H927Z" fill="#7fb1e2"/><rect x="933" y="647" width="2" height="6" fill="#7c7f9c"/><rect x="933" y="702" width="2" height="5.399999999999977" fill="#7c7f9c"/><path d="M927 707.2H941V710.4000000000001H937.4A3.5 3.8 0 0 1 930.6 710.4000000000001H927Z" fill="#7fb1e2"/><rect x="910" y="654" width="52" height="51.4" rx="5" fill="#7f8794" opacity=".85"/><rect x="908" y="652" width="52" height="52" rx="3.8" fill="#3a79a8"/><rect x="910" y="654" width="48" height="46.2" rx="2.6" fill="#fff"/><rect x="939.6" y="663.00" width="8.6" height="7.6" rx="1.6" fill="#3a79a8"/><rect x="939.6" y="672.90" width="8.6" height="7.6" rx="1.6" fill="#3a79a8"/><rect x="939.6" y="682.80" width="8.6" height="7.6" rx="1.6" fill="#3a79a8"/><path d="M927.8 662.8H931.6V666.8H935L929.7 672.1999999999999L924.4 666.8H927.8Z" fill="#2b3a4a"/><text x="929.7" y="681.6" font-size="9.5" text-anchor="middle" fill="#555">N</text><path d="M920 683.8H939.6" stroke="#d8d8d8" stroke-width="0.8"/><path d="M1020.9000000000001 642.2H1025.3000000000002A2.6 2.6 0 0 0 1030.5 642.2H1034.9V647.2H1020.9000000000001Z" fill="#7fb1e2"/><rect x="1026.9" y="647" width="2" height="6" fill="#7c7f9c"/><rect x="1004.5999999999999" y="654.2" width="52" height="51.6" rx="5" fill="#7f8794" opacity=".7"/><rect x="1002.5999999999999" y="652.2" width="52" height="52" rx="5" fill="#8c8c8c"/><rect x="1004.1999999999999" y="653.8000000000001" width="48.8" height="48.8" rx="3.6" fill="url(#gg)"/><path d="M1028.6 662.2L1042.8 690.0H1014.3999999999999Z" fill="#3a79a8"/><path d="M1023.6999999999999 678.0000000000001V685.6A4.9 2.0580000000000003 0 0 0 1033.5 685.6V678.0000000000001Z" fill="#dfe9f2"/><ellipse cx="1028.6" cy="678.0000000000001" rx="4.9" ry="2.0580000000000003" fill="#dfe9f2"/><path d="M1023.6999999999999 680.8039000000001A4.9 2.0580000000000003 0 0 0 1033.5 680.8039000000001M1023.6999999999999 683.8439000000001A4.9 2.0580000000000003 0 0 0 1033.5 683.8439000000001" fill="none" stroke="#3a79a8" stroke-width="0.7" opacity=".75"/><path d="M927 772.6H931.4A2.6 2.6 0 0 0 936.6 772.6H941V777.6H927Z" fill="#7fb1e2"/><rect x="933" y="777.6" width="2" height="6.0" fill="#7c7f9c"/><rect x="910" y="784.6" width="52" height="51.4" rx="5" fill="#7f8794" opacity=".85"/><rect x="908" y="782.6" width="52" height="52" rx="3.8" fill="#3a79a8"/><rect x="910" y="784.6" width="48" height="46.2" rx="2.6" fill="#fff"/><rect x="922.15" y="795.75" width="11.4" height="11.4" rx="1.6" fill="#2b3a4a"/><rect x="934.45" y="795.75" width="11.4" height="11.4" rx="1.6" fill="#2b3a4a"/><rect x="922.15" y="808.05" width="11.4" height="11.4" rx="1.6" fill="#2b3a4a"/><rect x="934.45" y="808.05" width="11.4" height="11.4" rx="1.6" fill="#2b3a4a"/><path d="M924.6499999999999 801.4499999999999H931.05M927.8499999999999 798.2499999999999V804.65" stroke="#fff" stroke-width="1.5" stroke-linecap="butt"/><path d="M937.3500000000001 801.4499999999999H942.95" stroke="#fff" stroke-width="1.5" stroke-linecap="butt"/><path d="M925.2499999999999 811.1500000000001L930.4499999999999 816.3500000000001M930.4499999999999 811.1500000000001L925.2499999999999 816.3500000000001" stroke="#fff" stroke-width="1.5" stroke-linecap="butt"/><path d="M937.1500000000001 813.7500000000001H943.1500000000001" stroke="#fff" stroke-width="1.5" stroke-linecap="butt"/><circle cx="940.1500000000001" cy="811.1500000000001" r="0.9" fill="#fff"/><circle cx="940.1500000000001" cy="816.3500000000001" r="0.9" fill="#fff"/><rect x="115.80000000000001" y="118.2" width="15.2" height="13" rx="3" fill="#fff" stroke="#76889e" stroke-width="1.5"/><text x="123.4" y="128.0" font-family="'Liberation Mono',monospace" font-size="9.6" text-anchor="middle" fill="#647b98" stroke="#647b98" stroke-width="0.3">01</text><rect x="225.1" y="118.2" width="15.2" height="13" rx="3" fill="#fff" stroke="#76889e" stroke-width="1.5"/><text x="232.7" y="128.0" font-family="'Liberation Mono',monospace" font-size="9.6" text-anchor="middle" fill="#647b98" stroke="#647b98" stroke-width="0.3">01</text><rect x="35.9" y="208.5" width="15.2" height="13" rx="3" fill="#fff" stroke="#76889e" stroke-width="1.5"/><text x="43.5" y="218.3" font-family="'Liberation Mono',monospace" font-size="9.6" text-anchor="middle" fill="#647b98" stroke="#647b98" stroke-width="0.3">01</text><rect x="166.5" y="306.5" width="15.2" height="13" rx="3" fill="#fff" stroke="#76889e" stroke-width="1.5"/><text x="174.1" y="316.3" font-family="'Liberation Mono',monospace" font-size="9.6" text-anchor="middle" fill="#647b98" stroke="#647b98" stroke-width="0.3">01</text><rect x="283.29999999999995" y="306.5" width="15.2" height="13" rx="3" fill="#fff" stroke="#76889e" stroke-width="1.5"/><text x="290.9" y="316.3" font-family="'Liberation Mono',monospace" font-size="9.6" text-anchor="middle" fill="#647b98" stroke="#647b98" stroke-width="0.3">01</text><rect x="763.1" y="117.3" width="15.2" height="13" rx="3" fill="#fff" stroke="#76889e" stroke-width="1.5"/><text x="770.7" y="127.1" font-family="'Liberation Mono',monospace" font-size="9.6" text-anchor="middle" fill="#647b98" stroke="#647b98" stroke-width="0.3">02</text><rect x="799.4" y="291.3" width="15.2" height="13" rx="3" fill="#fff" stroke="#76889e" stroke-width="1.5"/><text x="807" y="301.1" font-family="'Liberation Mono',monospace" font-size="9.6" text-anchor="middle" fill="#647b98" stroke="#647b98" stroke-width="0.3">02</text><rect x="949.6" y="124.19999999999999" width="15.2" height="13" rx="3" fill="#fff" stroke="#76889e" stroke-width="1.5"/><text x="957.2" y="134.0" font-family="'Liberation Mono',monospace" font-size="9.6" text-anchor="middle" fill="#647b98" stroke="#647b98" stroke-width="0.3">02</text><rect x="919.8" y="298.3" width="15.2" height="13" rx="3" fill="#fff" stroke="#76889e" stroke-width="1.5"/><text x="927.4" y="308.1" font-family="'Liberation Mono',monospace" font-size="9.6" text-anchor="middle" fill="#647b98" stroke="#647b98" stroke-width="0.3">02</text><rect x="926.6999999999999" y="437.1" width="15.2" height="13" rx="3" fill="#fff" stroke="#76889e" stroke-width="1.5"/><text x="934.3" y="446.90000000000003" font-family="'Liberation Mono',monospace" font-size="9.6" text-anchor="middle" fill="#647b98" stroke="#647b98" stroke-width="0.3">02</text><rect x="887.8" y="585.3" width="15.2" height="13" rx="3" fill="#fff" stroke="#76889e" stroke-width="1.5"/><text x="895.4" y="595.0999999999999" font-family="'Liberation Mono',monospace" font-size="9.6" text-anchor="middle" fill="#647b98" stroke="#647b98" stroke-width="0.3">02</text><rect x="926.6999999999999" y="585.3" width="15.2" height="13" rx="3" fill="#fff" stroke="#76889e" stroke-width="1.5"/><text x="934.3" y="595.0999999999999" font-family="'Liberation Mono',monospace" font-size="9.6" text-anchor="middle" fill="#647b98" stroke="#647b98" stroke-width="0.3">01</text><rect x="926.6999999999999" y="736.5" width="15.2" height="13" rx="3" fill="#fff" stroke="#76889e" stroke-width="1.5"/><text x="934.3" y="746.3" font-family="'Liberation Mono',monospace" font-size="9.6" text-anchor="middle" fill="#647b98" stroke="#647b98" stroke-width="0.3">01</text><rect x="1363" y="71" width="74" height="38" fill="#e6e6e6" stroke="#767676" stroke-width="2"/><rect x="1364.5" y="72.5" width="71" height="35" fill="none" stroke="#fff" stroke-width="1.4"/><path d="M1367.5 83.05V75.9H1374.6499999999999" fill="none" stroke="#4f7795" stroke-width="1.7"/><path d="M1367.5 97.35000000000001V104.5H1374.6499999999999" fill="none" stroke="#4f7795" stroke-width="1.7"/><path d="M1396.1 83.05V75.9H1388.95" fill="none" stroke="#4f7795" stroke-width="1.7"/><path d="M1396.1 97.35000000000001V104.5H1388.95" fill="none" stroke="#4f7795" stroke-width="1.7"/><path d="M1381.8 87.0V76.901M1377.51 81.191L1381.8 76.901L1386.09 81.191" fill="none" stroke="#33475a" stroke-width="1.2"/><path d="M1381.8 93.4V103.49900000000001M1377.51 99.209L1381.8 103.49900000000001L1386.09 99.209" fill="none" stroke="#33475a" stroke-width="1.2"/><path d="M1378.6 90.2H1368.501M1372.791 85.91L1368.501 90.2L1372.791 94.49000000000001" fill="none" stroke="#33475a" stroke-width="1.2"/><path d="M1385.0 90.2H1395.099M1390.809 85.91L1395.099 90.2L1390.809 94.49000000000001" fill="none" stroke="#33475a" stroke-width="1.2"/><circle cx="1420.6" cy="86.6" r="10.2" fill="#d0d0d0" stroke="#707070" stroke-width="1.6"/><path d="M1413.4 94.6L1405.6 102.6" stroke="#2b3a4a" stroke-width="3.4" stroke-linecap="butt"/></svg>
<div style="left:1438px;top:67px;width:26px;height:754px;background:#f0f0f0;"></div>
<div style="left:1438px;top:648px;width:26px;height:103px;background:#cdcdcd;"></div>
<div style="left:1438px;top:821px;width:26px;height:26px;background:#80ff80;"></div>
<div style="left:16px;top:821px;width:1422px;height:26px;background:#f0f0f0;"></div>
<div style="left:413px;top:821px;width:960px;height:26px;background:#cdcdcd;"></div>
<svg style="left:1444.7px;top:78.60000000000001px" width="12.6" height="7.199999999999999"><path d="M0.8 6.3999999999999995L6.3 0.8L11.8 6.3999999999999995" fill="none" stroke="#a0a0a0" stroke-width="2.1"/></svg>
<svg style="left:1444.7px;top:804.2px" width="12.6" height="7.199999999999999"><path d="M0.8 0.8L6.3 6.3999999999999995L11.8 0.8" fill="none" stroke="#a0a0a0" stroke-width="2.1"/></svg>
<svg style="left:24px;top:827px" width="10" height="15"><path d="M7.5 1.5L2 7.5L7.5 13.5" fill="none" stroke="#a0a0a0" stroke-width="2.1"/></svg>
<svg style="left:1420px;top:827px" width="10" height="15"><path d="M2.5 1.5L8 7.5L2.5 13.5" fill="none" stroke="#a0a0a0" stroke-width="2.1"/></svg>
<div style="left:9px;top:862px;width:1462px;height:32px;background:#abc9e0;"></div>
<div style="left:9px;top:894px;width:1462px;height:42px;background:#40607a;"></div>
<div style="left:9px;top:936px;width:1461px;height:236px;background:#f9f9f9;"></div>
<div style="left:9px;top:894px;width:1462px;height:1px;background:#7e98ae;"></div>
<div style="left:1471px;top:862px;width:1px;height:309px;background:#9c9c9c;"></div>
<svg style="left:15px;top:871px" width="36" height="16"><path d="M2 13.5L8.5 2.5L15 13.5Z" fill="#111"/><path d="M20 2L33 2L26.5 15Z" fill="#111"/></svg>
<span class="t" style="left:52.26px;top:871.20px;font-size:17.5px;line-height:17.5px;color:#000;">Data Viewer</span>
<svg style="left:1419px;top:868px" width="16" height="22"><path d="M5.6 12.4V5.6Q5.6 3 8 3Q10.4 3 10.4 5.6V12.4" fill="none" stroke="#0a0a0a" stroke-width="1.7"/><rect x="8.4" y="4.4" width="2.6" height="8" fill="#0a0a0a"/><path d="M3.2 13H12.8" stroke="#0a0a0a" stroke-width="1.9"/><path d="M8 13.6V18.6" stroke="#444" stroke-width="1.4"/></svg>
<svg style="left:1448px;top:872.6px" width="14" height="14"><path d="M1.6 3.2L12.4 11.8M12.4 3.2L1.6 11.8" stroke="#fff" stroke-width="2.4" fill="none" opacity=".8"/><path d="M1.6 2L12.4 10.6M12.4 2L1.6 10.6" stroke="#0a0a0a" stroke-width="2.7" fill="none"/></svg>
<div style="left:13px;top:905px;width:112.6px;height:31px;background:#abc9e0;border-right:1px solid #36536b;"></div>
<span class="t" style="left:23.76px;top:913.20px;font-size:17.5px;line-height:17.5px;color:#000;">DataViewer</span>
<div style="left:128px;top:905px;width:122.19999999999999px;height:31px;background:#abc9e0;border-right:1px solid #36536b;"></div>
<span class="t" style="left:138.76px;top:913.20px;font-size:17.5px;line-height:17.5px;color:#000;transform:scaleX(1.0051);">DataViewer1</span>
<div style="left:252.2px;top:905px;width:122.19999999999999px;height:31px;background:#abc9e0;border-right:1px solid #36536b;"></div>
<span class="t" style="left:262.96px;top:913.20px;font-size:17.5px;line-height:17.5px;color:#000;transform:scaleX(1.0055);">DataViewer2</span>
<div style="left:376.6px;top:905px;width:122.19999999999999px;height:31px;background:#abc9e0;border-right:1px solid #36536b;"></div>
<span class="t" style="left:387.36px;top:913.20px;font-size:17.5px;line-height:17.5px;color:#000;transform:scaleX(1.0042);">DataViewer3</span>
<div style="left:501px;top:905px;width:122.20000000000005px;height:31px;background:#abc9e0;border-right:1px solid #36536b;"></div>
<span class="t" style="left:511.76px;top:913.20px;font-size:17.5px;line-height:17.5px;color:#000;">DataViewer4</span>
<div style="left:625.4px;top:905px;width:122.39999999999998px;height:31px;background:#abc9e0;border-right:1px solid #36536b;"></div>
<span class="t" style="left:636.16px;top:913.20px;font-size:17.5px;line-height:17.5px;color:#000;">DataViewer5</span>
<div style="left:749.4px;top:902px;width:122.8px;height:35px;background:#f9f9f9;"></div>
<span class="t" style="left:760.36px;top:913.20px;font-size:17.5px;line-height:17.5px;color:#000;transform:scaleX(1.0042);">DataViewer6</span>
<div style="left:14px;top:940px;width:1225px;height:44px;background:#fff;border:1px solid #a9a9a9;border-radius:3px;"></div>
<span class="t" style="left:26.95px;top:955.20px;font-size:17.5px;line-height:17.5px;color:#808080;font-style:italic;transform:scaleX(1.0453);">Find in text, &lt;&lt;Null&gt;&gt;, &lt;&lt;Error&gt;&gt;, or row number</span>
<svg style="left:1241px;top:949.4px" width="32" height="25"><path d="M3.4 17L6.4 5Q7 1.4 10 1.4H12Q15 1.4 15 4.4V6.6H17V4.4Q17 1.4 20 1.4H22Q25 1.4 25.6 5L28.6 17Z" fill="#2b3a4a"/><circle cx="8" cy="17" r="5.9" fill="#fff" stroke="#2b3a4a" stroke-width="2.1"/><circle cx="24" cy="17" r="5.9" fill="#fff" stroke="#2b3a4a" stroke-width="2.1"/><rect x="13.2" y="13.4" width="5.6" height="5.6" fill="#2b3a4a"/><circle cx="16" cy="16.2" r="1.1" fill="#fff"/><path d="M6.6 13.6A4 4 0 0 1 10 15.4M22.6 13.6A4 4 0 0 1 26 15.4" stroke="#4f94cc" stroke-width="1.1" fill="none"/></svg>
<svg style="left:1273.2px;top:959.4000000000001px" width="9.0" height="5.800000000000001"><path d="M0.8 0.8L4.5 5.0L8.200000000000001 0.8" fill="none" stroke="#0a0a0a" stroke-width="2"/></svg>
<svg style="left:1292px;top:949px" width="27" height="27"><rect x="1.00" y="1.2" width="6.05" height="5" fill="#3a79a8"/><rect x="7.05" y="1.2" width="6.05" height="5" fill="#ffd800"/><rect x="13.10" y="1.2" width="6.05" height="5" fill="#008a00"/><rect x="19.15" y="1.2" width="6.05" height="5" fill="#b00000"/><path d="M10.6 9.2H15V13.6H18.4L12.8 18.6L7.2 13.6H10.6Z" fill="#2b3a4a"/><rect x="6.8" y="20" width="6" height="5" fill="#3a79a8"/><rect x="12.8" y="20" width="6" height="5" fill="#008a00"/></svg>
<svg style="left:1321.1000000000001px;top:959.4000000000001px" width="9.0" height="5.800000000000001"><path d="M0.8 0.8L4.5 5.0L8.200000000000001 0.8" fill="none" stroke="#0a0a0a" stroke-width="2"/></svg>
<div style="left:1334px;top:940px;width:1px;height:43px;background:#c8c8c8;"></div>
<svg style="left:1341.6px;top:947.6px;overflow:visible" width="28.4" height="28.4" viewBox="0 0 28 28"><path d="M7.25 24.80L6.29 24.14L5.39 23.39L4.57 22.57L3.83 21.67L3.17 20.70L2.60 19.68L2.13 18.62L1.75 17.51L1.48 16.38L1.32 15.22L1.26 14.06L1.31 12.89L1.46 11.73L1.72 10.60L2.09 9.49L2.55 8.42L3.11 7.39L3.76 6.42L4.50 5.52L5.31 4.68L6.20 3.93L7.15 3.26L8.17 2.67L9.23 2.19L7.35 -0.87L17.70 0.12L12.74 9.27L10.85 6.21L10.15 6.53L9.49 6.92L8.86 7.36L8.27 7.86L7.73 8.41L7.25 9.00L6.82 9.64L6.45 10.32L6.14 11.02L5.91 11.76L5.73 12.51L5.63 13.27L5.33 14.04L5.09 14.86L4.92 15.72L4.83 16.63L4.83 17.57L4.91 18.53L5.08 19.52L5.35 20.52L5.71 21.53L6.16 22.56L6.70 23.61L7.25 24.80Z" fill="#3a79a8"/><path d="M20.75 3.20L21.71 3.86L22.61 4.61L23.43 5.43L24.17 6.33L24.83 7.30L25.40 8.32L25.87 9.38L26.25 10.49L26.52 11.62L26.68 12.78L26.74 13.94L26.69 15.11L26.54 16.27L26.28 17.40L25.91 18.51L25.45 19.58L24.89 20.61L24.24 21.58L23.50 22.48L22.69 23.32L21.80 24.07L20.85 24.74L19.83 25.33L18.77 25.81L20.65 28.87L10.30 27.88L15.26 18.73L17.15 21.79L17.85 21.47L18.51 21.08L19.14 20.64L19.73 20.14L20.27 19.59L20.75 19.00L21.18 18.36L21.55 17.68L21.86 16.98L22.09 16.24L22.27 15.49L22.37 14.73L22.67 13.96L22.91 13.14L23.08 12.28L23.17 11.37L23.17 10.43L23.09 9.47L22.92 8.48L22.65 7.48L22.29 6.47L21.84 5.44L21.30 4.39L20.75 3.20Z" fill="#3a79a8"/></svg>
<svg style="left:1376px;top:947px" width="32" height="31"><path d="M2.4000000000000004 8.600000000000001V1.8000000000000007H9.2" fill="none" stroke="#5a819f" stroke-width="2.5"/><path d="M2.4000000000000004 22.2V29.0H9.2" fill="none" stroke="#5a819f" stroke-width="2.5"/><path d="M29.6 8.600000000000001V1.8000000000000007H22.8" fill="none" stroke="#5a819f" stroke-width="2.5"/><path d="M29.6 22.2V29.0H22.8" fill="none" stroke="#5a819f" stroke-width="2.5"/><path d="M16 12.2V2.7520000000000007M11.92 6.832000000000001L16 2.7520000000000007L20.08 6.832000000000001" fill="none" stroke="#33475a" stroke-width="1.2"/><path d="M16 18.6V28.048000000000002M11.92 23.968000000000004L16 28.048000000000002L20.08 23.968000000000004" fill="none" stroke="#33475a" stroke-width="1.2"/><path d="M12.8 15.4H3.3520000000000003M7.432 11.32L3.3520000000000003 15.4L7.432 19.48" fill="none" stroke="#33475a" stroke-width="1.2"/><path d="M19.2 15.4H28.648M24.567999999999998 11.32L28.648 15.4L24.567999999999998 19.48" fill="none" stroke="#33475a" stroke-width="1.2"/></svg>
<svg style="left:1408.2px;top:959.4000000000001px" width="9.0" height="5.800000000000001"><path d="M0.8 0.8L4.5 5.0L8.200000000000001 0.8" fill="none" stroke="#0a0a0a" stroke-width="2"/></svg>
<svg style="left:1425px;top:949px" width="28" height="27"><path d="M2.6 2.4V24H24.4V2.8H13.4" fill="none" stroke="#2b3a4a" stroke-width="1.6"/><path d="M13.4 2V16" stroke="#2b3a4a" stroke-width="1.7"/><path d="M8.8 15H18L13.4 20.8Z" fill="#2b3a4a"/></svg>
<svg style="left:1454.8px;top:959.4000000000001px" width="9.0" height="5.800000000000001"><path d="M0.8 0.8L4.5 5.0L8.200000000000001 0.8" fill="none" stroke="#0a0a0a" stroke-width="2"/></svg>
<div style="left:14px;top:988px;width:1456px;height:181px;background:#f0f0f0;border:1px solid #7f9ec4;"></div>
<div style="left:16px;top:989px;width:42px;height:34px;background:#f3f3f3;border-right:1px solid #d0d0d0;border-bottom:1px solid #d0d0d0;"></div>
<span class="t" style="left:31.80px;top:998.20px;font-size:18px;line-height:18px;color:#6a6a6a;">2</span>
<div style="left:58px;top:989px;width:1410px;height:34px;background:#6591ae;border-bottom:1px solid #4f7c9b;border-top:1px solid #557f9d;"></div>
<span class="t" style="left:65.35px;top:998.20px;font-size:18px;line-height:18px;color:#fff;-webkit-text-stroke:0.35px #fff;">promotion_code</span>
<div style="left:234px;top:989px;width:2px;height:34px;background:#4f7c9b;"></div>
<span class="t" style="left:242.74px;top:998.20px;font-size:18px;line-height:18px;color:#fff;-webkit-text-stroke:0.35px #fff;">dataflowID</span>
<div style="left:332px;top:989px;width:2px;height:34px;background:#4f7c9b;"></div>
<span class="t" style="left:340.65px;top:998.20px;font-size:18px;line-height:18px;color:#fff;-webkit-text-stroke:0.35px #fff;">OutputID</span>
<div style="left:418px;top:989px;width:2px;height:34px;background:#4f7c9b;"></div>
<span class="t" style="left:426.02px;top:998.20px;font-size:18px;line-height:18px;color:#fff;-webkit-text-stroke:0.35px #fff;">PID</span>
<div style="left:471.7px;top:989px;width:2px;height:34px;background:#4f7c9b;"></div>
<span class="t" style="left:479.72px;top:998.20px;font-size:18px;line-height:18px;color:#fff;-webkit-text-stroke:0.35px #fff;">ProspectiveBuyerKey</span>
<div style="left:657.5px;top:989px;width:2px;height:34px;background:#4f7c9b;"></div>
<span class="t" style="left:666.93px;top:998.20px;font-size:18px;line-height:18px;color:#fff;-webkit-text-stroke:0.35px #fff;">WorkflowID</span>
<div style="left:763.6px;top:989px;width:2px;height:34px;background:#4f7c9b;"></div>
<span class="t" style="left:772.25px;top:998.20px;font-size:18px;line-height:18px;color:#fff;-webkit-text-stroke:0.35px #fff;">OutputName</span>
<div style="left:878.7px;top:989px;width:2px;height:34px;background:#4f7c9b;"></div>
<span class="t" style="left:887.44px;top:998.20px;font-size:18px;line-height:18px;color:#fff;-webkit-text-stroke:0.35px #fff;">coupon_type</span>
<div style="left:995.3px;top:989px;width:2px;height:34px;background:#4f7c9b;"></div>
<span class="t" style="left:1003.32px;top:998.20px;font-size:18px;line-height:18px;color:#fff;-webkit-text-stroke:0.35px #fff;">RPIResolutionKey</span>
<div style="left:1154.1px;top:989px;width:2px;height:34px;background:#4f7c9b;"></div>
<span class="t" style="left:1162.84px;top:998.20px;font-size:18px;line-height:18px;color:#fff;-webkit-text-stroke:0.35px #fff;">coupon_code</span>
<div style="left:1276.4px;top:989px;width:2px;height:34px;background:#4f7c9b;"></div>
<span class="t" style="left:1284.71px;top:998.20px;font-size:18px;line-height:18px;color:#fff;-webkit-text-stroke:0.35px #fff;">record_id</span>
<div style="left:1364.3px;top:989px;width:2px;height:34px;background:#4f7c9b;"></div>
<span class="t" style="left:1373.04px;top:998.20px;font-size:18px;line-height:18px;color:#fff;-webkit-text-stroke:0.35px #fff;">coupon_gro</span>
<div style="left:16px;top:1022.9999999999999px;width:1452px;height:34.0px;background:#efefef;"></div>
<div style="left:16px;top:1025.6px;width:1452px;height:28.4px;background:#ffffff;"></div>
<div style="left:16px;top:1025.6px;width:42px;height:28.4px;background:linear-gradient(90deg,#ffffff 35%,#ececf0 100%);border-right:1px solid #d0d0d4;"></div>
<span class="t" style="left:43.46px;top:1031.20px;font-size:18px;line-height:18px;color:#000;">1</span>
<span class="t" style="left:64.12px;top:1030.20px;font-size:18px;line-height:18px;color:#000;">Product Registration</span>
<div style="left:233.8px;top:1025.6px;width:1.6px;height:28.4px;background:#e6e6e6;"></div>
<span class="t" style="left:241.83px;top:1030.20px;font-size:18px;line-height:18px;color:#000;">88</span>
<div style="left:331.8px;top:1025.6px;width:1.6px;height:28.4px;background:#e6e6e6;"></div>
<span class="t" style="left:339.68px;top:1030.20px;font-size:18px;line-height:18px;color:#000;">71</span>
<div style="left:417.8px;top:1025.6px;width:1.6px;height:28.4px;background:#e6e6e6;"></div>
<span class="t" style="left:425.23px;top:1030.20px;font-size:18px;line-height:18px;color:#000;">1250</span>
<div style="left:471.5px;top:1025.6px;width:1.6px;height:28.4px;background:#e6e6e6;"></div>
<span class="t" style="left:479.51px;top:1030.20px;font-size:18px;line-height:18px;color:#000;">-1</span>
<div style="left:657.3px;top:1025.6px;width:1.6px;height:28.4px;background:#e6e6e6;"></div>
<span class="t" style="left:665.33px;top:1030.20px;font-size:18px;line-height:18px;color:#000;">88</span>
<div style="left:763.4px;top:1025.6px;width:1.6px;height:28.4px;background:#e6e6e6;"></div>
<span class="t" style="left:770.72px;top:1030.20px;font-size:18px;line-height:18px;color:#000;">Filter</span>
<div style="left:878.5px;top:1025.6px;width:1.6px;height:28.4px;background:#e6e6e6;"></div>
<span class="t" style="left:885.64px;top:1030.20px;font-size:18px;line-height:18px;color:#000;">Individual</span>
<div style="left:995.0999999999999px;top:1025.6px;width:1.6px;height:28.4px;background:#e6e6e6;"></div>
<span class="t" style="left:1002.42px;top:1030.20px;font-size:18px;line-height:18px;color:#000;">PID</span>
<div style="left:1153.8999999999999px;top:1025.6px;width:1.6px;height:28.4px;background:#e6e6e6;"></div>
<span class="t" style="left:1161.22px;top:1030.20px;font-size:18px;line-height:18px;color:#000;">PR_65</span>
<div style="left:1276.2px;top:1025.6px;width:1.6px;height:28.4px;background:#e6e6e6;"></div>
<span class="t" style="left:1284.17px;top:1030.20px;font-size:18px;line-height:18px;color:#000;">985</span>
<div style="left:1364.1px;top:1025.6px;width:1.6px;height:28.4px;background:#e6e6e6;"></div>
<span class="t" style="left:1372.00px;top:1030.20px;font-size:18px;line-height:18px;color:#000;">2</span>
<div style="left:16px;top:1056.0px;width:1452px;height:34.0px;background:#efefef;"></div>
<div style="left:16px;top:1058.6px;width:1452px;height:28.4px;background:#fafafa;"></div>
<div style="left:16px;top:1058.6px;width:42px;height:28.4px;background:linear-gradient(90deg,#ffffff 35%,#ececf0 100%);border-right:1px solid #d0d0d4;"></div>
<span class="t" style="left:43.49px;top:1064.20px;font-size:18px;line-height:18px;color:#000;">2</span>
<span class="t" style="left:64.12px;top:1063.20px;font-size:18px;line-height:18px;color:#000;">Product Registration</span>
<div style="left:233.8px;top:1058.6px;width:1.6px;height:28.4px;background:#e6e6e6;"></div>
<span class="t" style="left:241.83px;top:1063.20px;font-size:18px;line-height:18px;color:#000;">88</span>
<div style="left:331.8px;top:1058.6px;width:1.6px;height:28.4px;background:#e6e6e6;"></div>
<span class="t" style="left:339.68px;top:1063.20px;font-size:18px;line-height:18px;color:#000;">71</span>
<div style="left:417.8px;top:1058.6px;width:1.6px;height:28.4px;background:#e6e6e6;"></div>
<span class="t" style="left:425.23px;top:1063.20px;font-size:18px;line-height:18px;color:#000;">1760</span>
<div style="left:471.5px;top:1058.6px;width:1.6px;height:28.4px;background:#e6e6e6;"></div>
<span class="t" style="left:479.51px;top:1063.20px;font-size:18px;line-height:18px;color:#000;">-1</span>
<div style="left:657.3px;top:1058.6px;width:1.6px;height:28.4px;background:#e6e6e6;"></div>
<span class="t" style="left:665.33px;top:1063.20px;font-size:18px;line-height:18px;color:#000;">88</span>
<div style="left:763.4px;top:1058.6px;width:1.6px;height:28.4px;background:#e6e6e6;"></div>
<span class="t" style="left:770.72px;top:1063.20px;font-size:18px;line-height:18px;color:#000;">Filter</span>
<div style="left:878.5px;top:1058.6px;width:1.6px;height:28.4px;background:#e6e6e6;"></div>
<span class="t" style="left:885.64px;top:1063.20px;font-size:18px;line-height:18px;color:#000;">Individual</span>
<div style="left:995.0999999999999px;top:1058.6px;width:1.6px;height:28.4px;background:#e6e6e6;"></div>
<span class="t" style="left:1002.42px;top:1063.20px;font-size:18px;line-height:18px;color:#000;">PID</span>
<div style="left:1153.8999999999999px;top:1058.6px;width:1.6px;height:28.4px;background:#e6e6e6;"></div>
<span class="t" style="left:1161.22px;top:1063.20px;font-size:18px;line-height:18px;color:#000;">PR_66</span>
<div style="left:1276.2px;top:1058.6px;width:1.6px;height:28.4px;background:#e6e6e6;"></div>
<span class="t" style="left:1284.17px;top:1063.20px;font-size:18px;line-height:18px;color:#000;">986</span>
<div style="left:1364.1px;top:1058.6px;width:1.6px;height:28.4px;background:#e6e6e6;"></div>
<span class="t" style="left:1372.00px;top:1063.20px;font-size:18px;line-height:18px;color:#000;">2</span>
<div style="left:16px;top:1142px;width:1452px;height:26px;background:#f0f0f0;"></div>
<div style="left:84px;top:1142px;width:951px;height:26px;background:#cdcdcd;"></div>
<svg style="left:66px;top:1148px" width="10" height="15"><path d="M7.5 1.5L2 7.5L7.5 13.5" fill="none" stroke="#a0a0a0" stroke-width="2.1"/></svg>
<svg style="left:1449px;top:1148px" width="10" height="15"><path d="M2.5 1.5L8 7.5L2.5 13.5" fill="none" stroke="#a0a0a0" stroke-width="2.1"/></svg>
<div style="left:9px;top:1171px;width:1462px;height:1px;background:#b9bdc1;"></div>
<div style="left:9px;top:1172px;width:177px;height:40px;background:#abc9e0;"></div>
<div style="left:186px;top:1171px;width:146px;height:44px;background:#f9f9f9;"></div>
<div style="left:332px;top:1172px;width:83px;height:40px;background:#abc9e0;border:1px solid #4d6f8a;border-top:none;"></div>
<svg style="left:20px;top:1180px" width="26" height="24"><path d="M12.6 1.6C19 1.6 23.6 5 23.6 9.6C23.6 14.2 19 17.4 12.6 17.4C11.4 17.4 10.2 17.3 9.2 17L3.4 21.4L5.4 15.4C3 14 1.6 12 1.6 9.6C1.6 5 6.2 1.6 12.6 1.6Z" fill="#fff" stroke="#8b8b8b" stroke-width="1.2"/><text x="12.4" y="14.6" font-family="'Liberation Serif',serif" font-style="italic" font-weight="700" font-size="14.5" text-anchor="middle" fill="#222">i</text></svg>
<span class="t" style="left:49.66px;top:1185.20px;font-size:17.5px;line-height:17.5px;color:#000;">Message Viewer</span>
<svg style="left:199px;top:1183px" width="25" height="18"><rect x="0.0" y="0.0" width="4.8" height="4.8" fill="#2b3a4a"/><rect x="6.3" y="0.0" width="4.8" height="4.8" fill="#2b3a4a"/><rect x="12.6" y="0.0" width="4.8" height="4.8" fill="#2b3a4a"/><rect x="18.9" y="0.0" width="4.8" height="4.8" fill="#2b3a4a"/><rect x="0.0" y="6.2" width="4.8" height="4.8" fill="#2b3a4a"/><rect x="6.3" y="6.2" width="4.8" height="4.8" fill="#3a79a8"/><rect x="12.6" y="6.2" width="4.8" height="4.8" fill="#3a79a8"/><rect x="18.9" y="6.2" width="4.8" height="4.8" fill="#3a79a8"/><rect x="0.0" y="12.4" width="4.8" height="4.8" fill="#2b3a4a"/><rect x="6.3" y="12.4" width="4.8" height="4.8" fill="#3a79a8"/><rect x="12.6" y="12.4" width="4.8" height="4.8" fill="#3a79a8"/><rect x="18.9" y="12.4" width="4.8" height="4.8" fill="#3a79a8"/></svg>
<span class="t" style="left:227.85px;top:1185.20px;font-size:17.5px;line-height:17.5px;color:#000;transform:scaleX(1.0087);">Data Viewer</span>
<svg style="left:343px;top:1179px" width="28" height="28"><circle cx="18" cy="10" r="7.6" fill="#9fb6c8" stroke="#6c7f90" stroke-width="1.5"/><path d="M12 16L3.4 24.6" stroke="#2b3a4a" stroke-width="3"/></svg>
<span class="t" style="left:372.26px;top:1185.20px;font-size:17.5px;line-height:17.5px;color:#000;">Find</span>
<div style="left:0px;top:1218px;width:2206px;height:1px;background:#c4c8cc;"></div>
<div style="left:0px;top:1219px;width:2206px;height:2px;background:#f2f2f2;"></div>
<div style="left:1480px;top:0px;width:723px;height:31px;background:#dce9fc;"></div>
<div style="left:1480px;top:31px;width:723px;height:108px;background:#40607a;"></div>
<div style="left:1480px;top:30px;width:723px;height:1px;background:#9db0c2;"></div>
<div style="left:1480px;top:139px;width:723px;height:1032px;background:#f9f9f9;"></div>
<div style="left:2203px;top:0px;width:1px;height:1171px;background:#a8a8a8;"></div>
<svg style="left:1486px;top:6px" width="36" height="18"><path d="M14 2V16L1.5 9Z" fill="#111" stroke="#8a8a8a" stroke-width="1"/><path d="M20 2V16L32.5 9Z" fill="#111" stroke="#8a8a8a" stroke-width="1"/></svg>
<span class="t" style="left:1523.45px;top:8.20px;font-size:17.5px;line-height:17.5px;color:#000;transform:scaleX(1.0090);">Properties</span>
<svg style="left:2151px;top:5px" width="16" height="22"><path d="M5.6 12.4V5.6Q5.6 3 8 3Q10.4 3 10.4 5.6V12.4" fill="none" stroke="#0a0a0a" stroke-width="1.7"/><rect x="8.4" y="4.4" width="2.6" height="8" fill="#0a0a0a"/><path d="M3.2 13H12.8" stroke="#0a0a0a" stroke-width="1.9"/><path d="M8 13.6V18.6" stroke="#444" stroke-width="1.4"/></svg>
<svg style="left:2179.6px;top:9.2px" width="14" height="14"><path d="M1.6 3.2L12.4 11.8M12.4 3.2L1.6 11.8" stroke="#fff" stroke-width="2.4" fill="none" opacity=".8"/><path d="M1.6 2L12.4 10.6M12.4 2L1.6 10.6" stroke="#0a0a0a" stroke-width="2.7" fill="none"/></svg>
<div style="left:1486px;top:37px;width:54px;height:54px;background:#fff;border-radius:6px;"></div>
<svg style="left:1486px;top:37px" width="54" height="54"><path d="M27 6.4L47.8 47.4H6.2Z" fill="#3a79a8"/><path d="M19.8 30.400000000000002V40.800000000000004A7.2 3.024 0 0 0 34.2 40.800000000000004V30.400000000000002Z" fill="#fff"/><ellipse cx="27" cy="30.400000000000002" rx="7.2" ry="3.024" fill="#fff"/><path d="M19.8 34.351200000000006A7.2 3.024 0 0 0 34.2 34.351200000000006M19.8 38.5112A7.2 3.024 0 0 0 34.2 38.5112" fill="none" stroke="#3a79a8" stroke-width="0.7" opacity=".75"/></svg>
<span class="t" style="left:1549.73px;top:43.20px;font-size:17.8px;line-height:17.8px;color:#fff;font-weight:700;">RdbmsOutput</span>
<span class="t" style="left:1549.47px;top:73.20px;font-size:17.5px;line-height:17.5px;color:#c9d5de;">RDBMS Output</span>
<div style="left:1484px;top:107px;width:76.59999999999991px;height:32px;background:#abc9e0;border-right:1px solid #36536b;border-left:1px solid #8fb0c8;"></div>
<span class="t" style="left:1495.64px;top:115.20px;font-size:17.5px;line-height:17.5px;color:#000;transform:scaleX(0.9706);">Source</span>
<div style="left:1643px;top:107px;width:85.20000000000005px;height:32px;background:#abc9e0;border-right:1px solid #36536b;border-left:1px solid #8fb0c8;"></div>
<span class="t" style="left:1654.55px;top:115.20px;font-size:17.5px;line-height:17.5px;color:#000;transform:scaleX(1.0382);">Options</span>
<div style="left:1730px;top:107px;width:73.20000000000005px;height:32px;background:#abc9e0;border-right:1px solid #36536b;border-left:1px solid #8fb0c8;"></div>
<span class="t" style="left:1741.54px;top:115.20px;font-size:17.5px;line-height:17.5px;color:#000;transform:scaleX(0.9809);">Create</span>
<div style="left:1805px;top:107px;width:88.79999999999995px;height:32px;background:#abc9e0;border-right:1px solid #36536b;border-left:1px solid #8fb0c8;"></div>
<span class="t" style="left:1815.97px;top:115.20px;font-size:17.5px;line-height:17.5px;color:#000;transform:scaleX(0.9931);">Pre/Post</span>
<div style="left:1896px;top:107px;width:98.29999999999995px;height:32px;background:#abc9e0;border-right:1px solid #36536b;border-left:1px solid #8fb0c8;"></div>
<span class="t" style="left:1906.96px;top:115.20px;font-size:17.5px;line-height:17.5px;color:#000;transform:scaleX(1.0042);">Execution</span>
<div style="left:1561.5px;top:104px;width:80px;height:36px;background:#f9f9f9;"></div>
<span class="t" style="left:1573.72px;top:115.20px;font-size:17.5px;line-height:17.5px;color:#000;transform:scaleX(1.0680);">Output</span>
<svg style="left:1493.0px;top:171.0px" width="13.799999999999999" height="8.2"><path d="M0.8 7.3999999999999995L6.8999999999999995 0.8L13.0 7.3999999999999995" fill="none" stroke="#40607a" stroke-width="2.7"/></svg>
<span class="t" style="left:1517.10px;top:170.20px;font-size:16px;line-height:16px;color:#43627c;transform:scaleX(0.8601);">TABLE</span>
<span class="t" style="left:1497.36px;top:209.20px;font-size:17.5px;line-height:17.5px;color:#000;transform:scaleX(0.9429);">Schema</span>
<div style="left:1731px;top:199px;width:459px;height:33px;background:#fff;border:1px solid #ababab;"></div>
<span class="t" style="left:1739.64px;top:209.20px;font-size:17.5px;line-height:17.5px;color:#000;transform:scaleX(0.9326);">${RPISchema}</span>
<svg style="left:2168.7999999999997px;top:209.7px" width="9.2" height="5.800000000000001"><path d="M0.8 0.8L4.6 5.0L8.4 0.8" fill="none" stroke="#333" stroke-width="1.5"/></svg>
<span class="t" style="left:1497.73px;top:248.20px;font-size:17.5px;line-height:17.5px;color:#000;transform:scaleX(0.9540);">Table</span>
<div style="left:1731px;top:238px;width:459px;height:33px;background:#fff;border:1px solid #ababab;"></div>
<span class="t" style="left:1739.63px;top:248.20px;font-size:17.5px;line-height:17.5px;color:#000;transform:scaleX(0.9923);">${RPICouponAssignmentTableName}</span>
<svg style="left:2168.7999999999997px;top:248.7px" width="9.2" height="5.800000000000001"><path d="M0.8 0.8L4.6 5.0L8.4 0.8" fill="none" stroke="#333" stroke-width="1.5"/></svg>
<svg style="left:2077.6px;top:287px;overflow:visible" width="23.2" height="23.2" viewBox="0 0 28 28"><path d="M7.25 24.80L6.29 24.14L5.39 23.39L4.57 22.57L3.83 21.67L3.17 20.70L2.60 19.68L2.13 18.62L1.75 17.51L1.48 16.38L1.32 15.22L1.26 14.06L1.31 12.89L1.46 11.73L1.72 10.60L2.09 9.49L2.55 8.42L3.11 7.39L3.76 6.42L4.50 5.52L5.31 4.68L6.20 3.93L7.15 3.26L8.17 2.67L9.23 2.19L7.35 -0.87L17.70 0.12L12.74 9.27L10.85 6.21L10.15 6.53L9.49 6.92L8.86 7.36L8.27 7.86L7.73 8.41L7.25 9.00L6.82 9.64L6.45 10.32L6.14 11.02L5.91 11.76L5.73 12.51L5.63 13.27L5.33 14.04L5.09 14.86L4.92 15.72L4.83 16.63L4.83 17.57L4.91 18.53L5.08 19.52L5.35 20.52L5.71 21.53L6.16 22.56L6.70 23.61L7.25 24.80Z" fill="#3a79a8"/><path d="M20.75 3.20L21.71 3.86L22.61 4.61L23.43 5.43L24.17 6.33L24.83 7.30L25.40 8.32L25.87 9.38L26.25 10.49L26.52 11.62L26.68 12.78L26.74 13.94L26.69 15.11L26.54 16.27L26.28 17.40L25.91 18.51L25.45 19.58L24.89 20.61L24.24 21.58L23.50 22.48L22.69 23.32L21.80 24.07L20.85 24.74L19.83 25.33L18.77 25.81L20.65 28.87L10.30 27.88L15.26 18.73L17.15 21.79L17.85 21.47L18.51 21.08L19.14 20.64L19.73 20.14L20.27 19.59L20.75 19.00L21.18 18.36L21.55 17.68L21.86 16.98L22.09 16.24L22.27 15.49L22.37 14.73L22.67 13.96L22.91 13.14L23.08 12.28L23.17 11.37L23.17 10.43L23.09 9.47L22.92 8.48L22.65 7.48L22.29 6.47L21.84 5.44L21.30 4.39L20.75 3.20Z" fill="#3a79a8"/></svg>
<svg style="left:2110px;top:285px" width="26" height="28"><path d="M1.6 6.4L9.6 15.2V24.4Q11.9 25.8 14.2 24.4V15.2L22.2 6.4Z" fill="#5c5c60"/><ellipse cx="11.9" cy="6.2" rx="10.2" ry="3.6" fill="#fff" stroke="#5c5c60" stroke-width="1.5"/></svg>
<svg style="left:2135.7999999999997px;top:296.2px" width="8.6" height="5.800000000000001"><path d="M0.8 0.8L4.3 5.0L7.8 0.8" fill="none" stroke="#0a0a0a" stroke-width="2"/></svg>
<svg style="left:2152px;top:284px" width="30" height="30"><circle cx="16.1" cy="11.8" r="8.3" fill="#dcdcdc" stroke="#6f6f6f" stroke-width="1.6"/><path d="M10 18.6L3 25.4" stroke="#2b3a4a" stroke-width="3.2"/></svg>
<svg style="left:2179.0px;top:296.2px" width="8.8" height="5.800000000000001"><path d="M0.8 0.8L4.4 5.0L8.0 0.8" fill="none" stroke="#0a0a0a" stroke-width="2"/></svg>
<svg style="left:1493.0px;top:344.0px" width="13.799999999999999" height="8.2"><path d="M0.8 7.3999999999999995L6.8999999999999995 0.8L13.0 7.3999999999999995" fill="none" stroke="#40607a" stroke-width="2.7"/></svg>
<span class="t" style="left:1516.76px;top:343.20px;font-size:16px;line-height:16px;color:#43627c;transform:scaleX(0.8832);">SETTINGS</span>
<span class="t" style="left:1493.76px;top:385.20px;font-size:17.5px;line-height:17.5px;color:#000;transform:scaleX(1.0272);">Open table</span>
<div style="left:1728px;top:375px;width:459px;height:33px;background:linear-gradient(#f1f1f1,#e4e4e4);border:1px solid #acacac;"></div>
<span class="t" style="left:1738.03px;top:385.20px;font-size:17.5px;line-height:17.5px;color:#000;transform:scaleX(1.0178);">When first record is read</span>
<svg style="left:2166.3999999999996px;top:387.7px" width="9.2" height="5.800000000000001"><path d="M0.8 0.8L4.6 5.0L8.4 0.8" fill="none" stroke="#333" stroke-width="1.5"/></svg>
<div style="left:1495px;top:425px;width:20px;height:20px;background:#fff;border:1px solid #333;"></div>
<svg style="left:1495px;top:425px" width="20" height="20"><path d="M4.2 10.2L8.2 14.6L15.8 4.6" fill="none" stroke="#111" stroke-width="2.4"/></svg>
<span class="t" style="left:1523.75px;top:427.20px;font-size:17.5px;line-height:17.5px;color:#000;transform:scaleX(1.0096);">Run scripts when no records are present</span>
<svg style="left:1493.0px;top:470.0px" width="13.799999999999999" height="8.2"><path d="M0.8 0.8L6.8999999999999995 7.3999999999999995L13.0 0.8" fill="none" stroke="#40607a" stroke-width="2.7"/></svg>
<span class="t" style="left:1516.09px;top:469.20px;font-size:16px;line-height:16px;color:#43627c;transform:scaleX(0.8896);">INSERT</span>
<svg style="left:1493.0px;top:510.0px" width="13.799999999999999" height="8.2"><path d="M0.8 0.8L6.8999999999999995 7.3999999999999995L13.0 0.8" fill="none" stroke="#40607a" stroke-width="2.7"/></svg>
<span class="t" style="left:1516.28px;top:509.20px;font-size:16px;line-height:16px;color:#43627c;transform:scaleX(0.9109);">UPDATE</span>
<svg style="left:1493.0px;top:550.0px" width="13.799999999999999" height="8.2"><path d="M0.8 0.8L6.8999999999999995 7.3999999999999995L13.0 0.8" fill="none" stroke="#40607a" stroke-width="2.7"/></svg>
<span class="t" style="left:1516.28px;top:549.20px;font-size:16px;line-height:16px;color:#43627c;transform:scaleX(0.8514);">DELETE</span>
<svg style="left:1493.0px;top:590.0px" width="13.799999999999999" height="8.2"><path d="M0.8 7.3999999999999995L6.8999999999999995 0.8L13.0 7.3999999999999995" fill="none" stroke="#40607a" stroke-width="2.7"/></svg>
<span class="t" style="left:1516.73px;top:589.20px;font-size:16px;line-height:16px;color:#43627c;transform:scaleX(0.9306);">SCHEMA</span>
<svg style="left:1496px;top:626px" width="32" height="26"><rect x="1" y="1.5" width="17" height="5.6" fill="#fcfcfc" stroke="#dcdcdc" stroke-width="1"/><rect x="1" y="9.6" width="17" height="5.6" fill="#f7eeb0" stroke="#e9dfa0" stroke-width="1"/><rect x="1" y="17.6" width="17" height="5.6" fill="#fcfcfc" stroke="#dcdcdc" stroke-width="1"/><path d="M21.5 8.8L28.5 15.6M28.5 8.8L21.5 15.6" stroke="#eab0b0" stroke-width="1.6"/></svg>
<div style="left:2082px;top:619px;width:106px;height:39px;background:#dddddd;border:1px solid #707070;"></div>
<span class="t" style="left:2089.70px;top:632.20px;font-size:17.5px;line-height:17.5px;color:#000;transform:scaleX(1.0431);">Mappings</span>
<svg style="left:2172.6px;top:636.8000000000001px" width="9.0" height="6.0"><path d="M0.8 0.8L4.5 5.2L8.200000000000001 0.8" fill="none" stroke="#111" stroke-width="1.8"/></svg>
<div style="left:1491px;top:661px;width:702px;height:426px;background:#fff;border:1px solid #8a8a8a;overflow:hidden;"></div>
<div style="left:1493px;top:663px;width:672px;height:39.5px;background:#6591ae;border-bottom:1px solid #3f6a8a;"></div>
<div style="left:1827px;top:663px;width:1.6px;height:39.5px;background:#355f7f;"></div>
<span class="t" style="left:1499.54px;top:674.20px;font-size:18px;line-height:18px;color:#fff;-webkit-text-stroke:0.35px #fff;">Input field</span>
<span class="t" style="left:1836.69px;top:674.20px;font-size:18px;line-height:18px;color:#fff;-webkit-text-stroke:0.35px #fff;">SQL field</span>
<div style="left:1493px;top:702px;width:672px;height:39px;background:#fff;"></div>
<span class="t" style="left:1836.64px;top:713.20px;font-size:18px;line-height:18px;color:#444;">coupon_assignment_id</span>
<div style="left:1493px;top:740px;width:672px;height:38px;background:#f9f9f9;"></div>
<span class="t" style="left:1499.65px;top:751.20px;font-size:18px;line-height:18px;color:#444;">promotion_code</span>
<span class="t" style="left:1836.25px;top:751.20px;font-size:18px;line-height:18px;color:#444;">promotion_code</span>
<div style="left:1493px;top:777px;width:672px;height:39px;background:#fff;"></div>
<span class="t" style="left:1500.04px;top:788.20px;font-size:18px;line-height:18px;color:#444;">coupon_code</span>
<span class="t" style="left:1836.64px;top:788.20px;font-size:18px;line-height:18px;color:#444;">coupon_code</span>
<div style="left:1493px;top:815px;width:672px;height:38px;background:#f9f9f9;"></div>
<span class="t" style="left:1500.04px;top:826.20px;font-size:18px;line-height:18px;color:#444;">coupon_type</span>
<span class="t" style="left:1836.64px;top:826.20px;font-size:18px;line-height:18px;color:#444;">coupon_type</span>
<div style="left:1493px;top:852px;width:672px;height:38px;background:#fff;"></div>
<span class="t" style="left:1499.32px;top:863.20px;font-size:18px;line-height:18px;color:#444;">RPIResolutionKey</span>
<span class="t" style="left:1835.92px;top:863.20px;font-size:18px;line-height:18px;color:#444;">RPIResolutionKey</span>
<div style="left:1493px;top:889px;width:672px;height:39px;background:#f9f9f9;"></div>
<span class="t" style="left:1499.32px;top:901.20px;font-size:18px;line-height:18px;color:#444;">PID</span>
<span class="t" style="left:1836.21px;top:901.20px;font-size:18px;line-height:18px;color:#444;">resolution_key_int01</span>
<div style="left:1493px;top:927px;width:672px;height:38px;background:#fff;"></div>
<span class="t" style="left:1499.32px;top:938.20px;font-size:18px;line-height:18px;color:#444;">ProspectiveBuyerKey</span>
<span class="t" style="left:1836.21px;top:938.20px;font-size:18px;line-height:18px;color:#444;">resolution_key_int02</span>
<div style="left:1493px;top:964px;width:672px;height:39px;background:#f9f9f9;"></div>
<span class="t" style="left:1836.21px;top:975.20px;font-size:18px;line-height:18px;color:#444;">resolution_key_int03</span>
<div style="left:1493px;top:1002px;width:672px;height:38px;background:#fff;"></div>
<span class="t" style="left:1836.21px;top:1013.20px;font-size:18px;line-height:18px;color:#444;">resolution_key_str01</span>
<div style="left:1493px;top:1039px;width:672px;height:38px;background:#f9f9f9;"></div>
<span class="t" style="left:1836.21px;top:1050.20px;font-size:18px;line-height:18px;color:#444;">resolution_key_str02</span>
<div style="left:1493px;top:739px;width:672px;height:3px;background:linear-gradient(#eeeeee,#c8c8c8 50%,#eeeeee);"></div>
<div style="left:1493px;top:776px;width:672px;height:3px;background:linear-gradient(#eeeeee,#c8c8c8 50%,#eeeeee);"></div>
<div style="left:1493px;top:814px;width:672px;height:3px;background:linear-gradient(#eeeeee,#c8c8c8 50%,#eeeeee);"></div>
<div style="left:1493px;top:851px;width:672px;height:3px;background:linear-gradient(#eeeeee,#c8c8c8 50%,#eeeeee);"></div>
<div style="left:1493px;top:888px;width:672px;height:3px;background:linear-gradient(#eeeeee,#c8c8c8 50%,#eeeeee);"></div>
<div style="left:1493px;top:926px;width:672px;height:3px;background:linear-gradient(#eeeeee,#c8c8c8 50%,#eeeeee);"></div>
<div style="left:1493px;top:963px;width:672px;height:3px;background:linear-gradient(#eeeeee,#c8c8c8 50%,#eeeeee);"></div>
<div style="left:1493px;top:1001px;width:672px;height:3px;background:linear-gradient(#eeeeee,#c8c8c8 50%,#eeeeee);"></div>
<div style="left:1493px;top:1038px;width:672px;height:3px;background:linear-gradient(#eeeeee,#c8c8c8 50%,#eeeeee);"></div>
<div style="left:1493px;top:1075px;width:672px;height:3px;background:linear-gradient(#eeeeee,#c8c8c8 50%,#eeeeee);"></div>
<div style="left:1493px;top:1078px;width:672px;height:8px;background:#fff;"></div>
<div style="left:1827px;top:702px;width:1.6px;height:384px;background:#c8c8c8;"></div>
<div style="left:2165px;top:663px;width:26.5px;height:423px;background:#f0f0f0;"></div>
<div style="left:2165px;top:689px;width:26.5px;height:251px;background:#cdcdcd;"></div>
<svg style="left:2171.7999999999997px;top:672.6px" width="12.6" height="7.199999999999999"><path d="M0.8 6.3999999999999995L6.3 0.8L11.8 6.3999999999999995" fill="none" stroke="#a0a0a0" stroke-width="2.1"/></svg>
<svg style="left:2171.7999999999997px;top:1068.2px" width="12.6" height="7.199999999999999"><path d="M0.8 0.8L6.3 6.3999999999999995L11.8 0.8" fill="none" stroke="#a0a0a0" stroke-width="2.1"/></svg>
<div style="left:1485px;top:1108px;width:713px;height:1px;background:#dedede;"></div>
<svg style="left:1492px;top:1121px" width="34" height="34"><path d="M2.2 17.2L7.4 13L12 20.6C15.6 12.4 21.6 5.8 29 2.4L30.6 5.2C23.6 10.6 18.4 19.4 14.6 30.2H9.6C8 25.4 5.6 21 2.2 17.2Z" fill="#0f8a3e"/></svg>
<span class="t" style="left:1530.20px;top:1131.20px;font-size:17.5px;line-height:17.5px;color:#000;transform:scaleX(1.0322);">Commit</span>
<svg style="left:1604px;top:1121px" width="32" height="34"><path d="M4.4 5.2L26.6 29.2M26.6 5.2L4.4 29.2" stroke="#a90000" stroke-width="5" fill="none"/></svg>
<span class="t" style="left:1640.92px;top:1131.20px;font-size:17.5px;line-height:17.5px;color:#000;transform:scaleX(0.9640);">Revert</span>
<svg style="left:2130px;top:1122px" width="32" height="32"><circle cx="15.8" cy="15.7" r="13.7" fill="#fdfdfd" stroke="#6c6c6c" stroke-width="1.2"/><text x="15.8" y="23.4" font-family="'Liberation Sans',sans-serif" font-weight="700" font-size="21.5" text-anchor="middle" fill="#2b3a4a">?</text></svg>
<div style="left:2167px;top:1116px;width:1.5px;height:43px;background:#c8c8c8;"></div>
<svg style="left:2174px;top:1132px" width="18" height="12"><path d="M1 1H16L8.5 10.4Z" fill="#111"/></svg>
<div style="left:1480px;top:1171px;width:130px;height:44px;background:#f9f9f9;"></div>
<div style="left:1609.5px;top:1172px;width:111.5px;height:40px;background:#abc9e0;border:1px solid #4d6f8a;"></div>
<svg style="left:1494px;top:1179px" width="24" height="28"><rect x="1.5" y="1.5" width="16" height="22" fill="#fff" stroke="#666a70" stroke-width="1.2"/><path d="M8.6 16.4L12.8 22.4L19.6 12.6" fill="none" stroke="#a80000" stroke-width="2.6"/></svg>
<span class="t" style="left:1520.24px;top:1185.20px;font-size:17.5px;line-height:17.5px;color:#000;transform:scaleX(1.0167);">Properties</span>
<svg style="left:1628.6px;top:1180px" width="14" height="26"><rect x="0.0" y="0.0" width="5" height="5" fill="#2b3a4a"/><rect x="6.5" y="0.0" width="5" height="5" fill="#2b3a4a"/><rect x="0.0" y="6.3" width="5" height="5" fill="#3a79a8"/><rect x="6.5" y="6.3" width="5" height="5" fill="#3a79a8"/><rect x="0.0" y="12.7" width="5" height="5" fill="#3a79a8"/><rect x="6.5" y="12.7" width="5" height="5" fill="#3a79a8"/><rect x="0.0" y="19.0" width="5" height="5" fill="#3a79a8"/><rect x="6.5" y="19.0" width="5" height="5" fill="#3a79a8"/></svg>
<span class="t" style="left:1651.46px;top:1185.20px;font-size:17.5px;line-height:17.5px;color:#000;transform:scaleX(0.9429);">Schema</span>
</body></html>
